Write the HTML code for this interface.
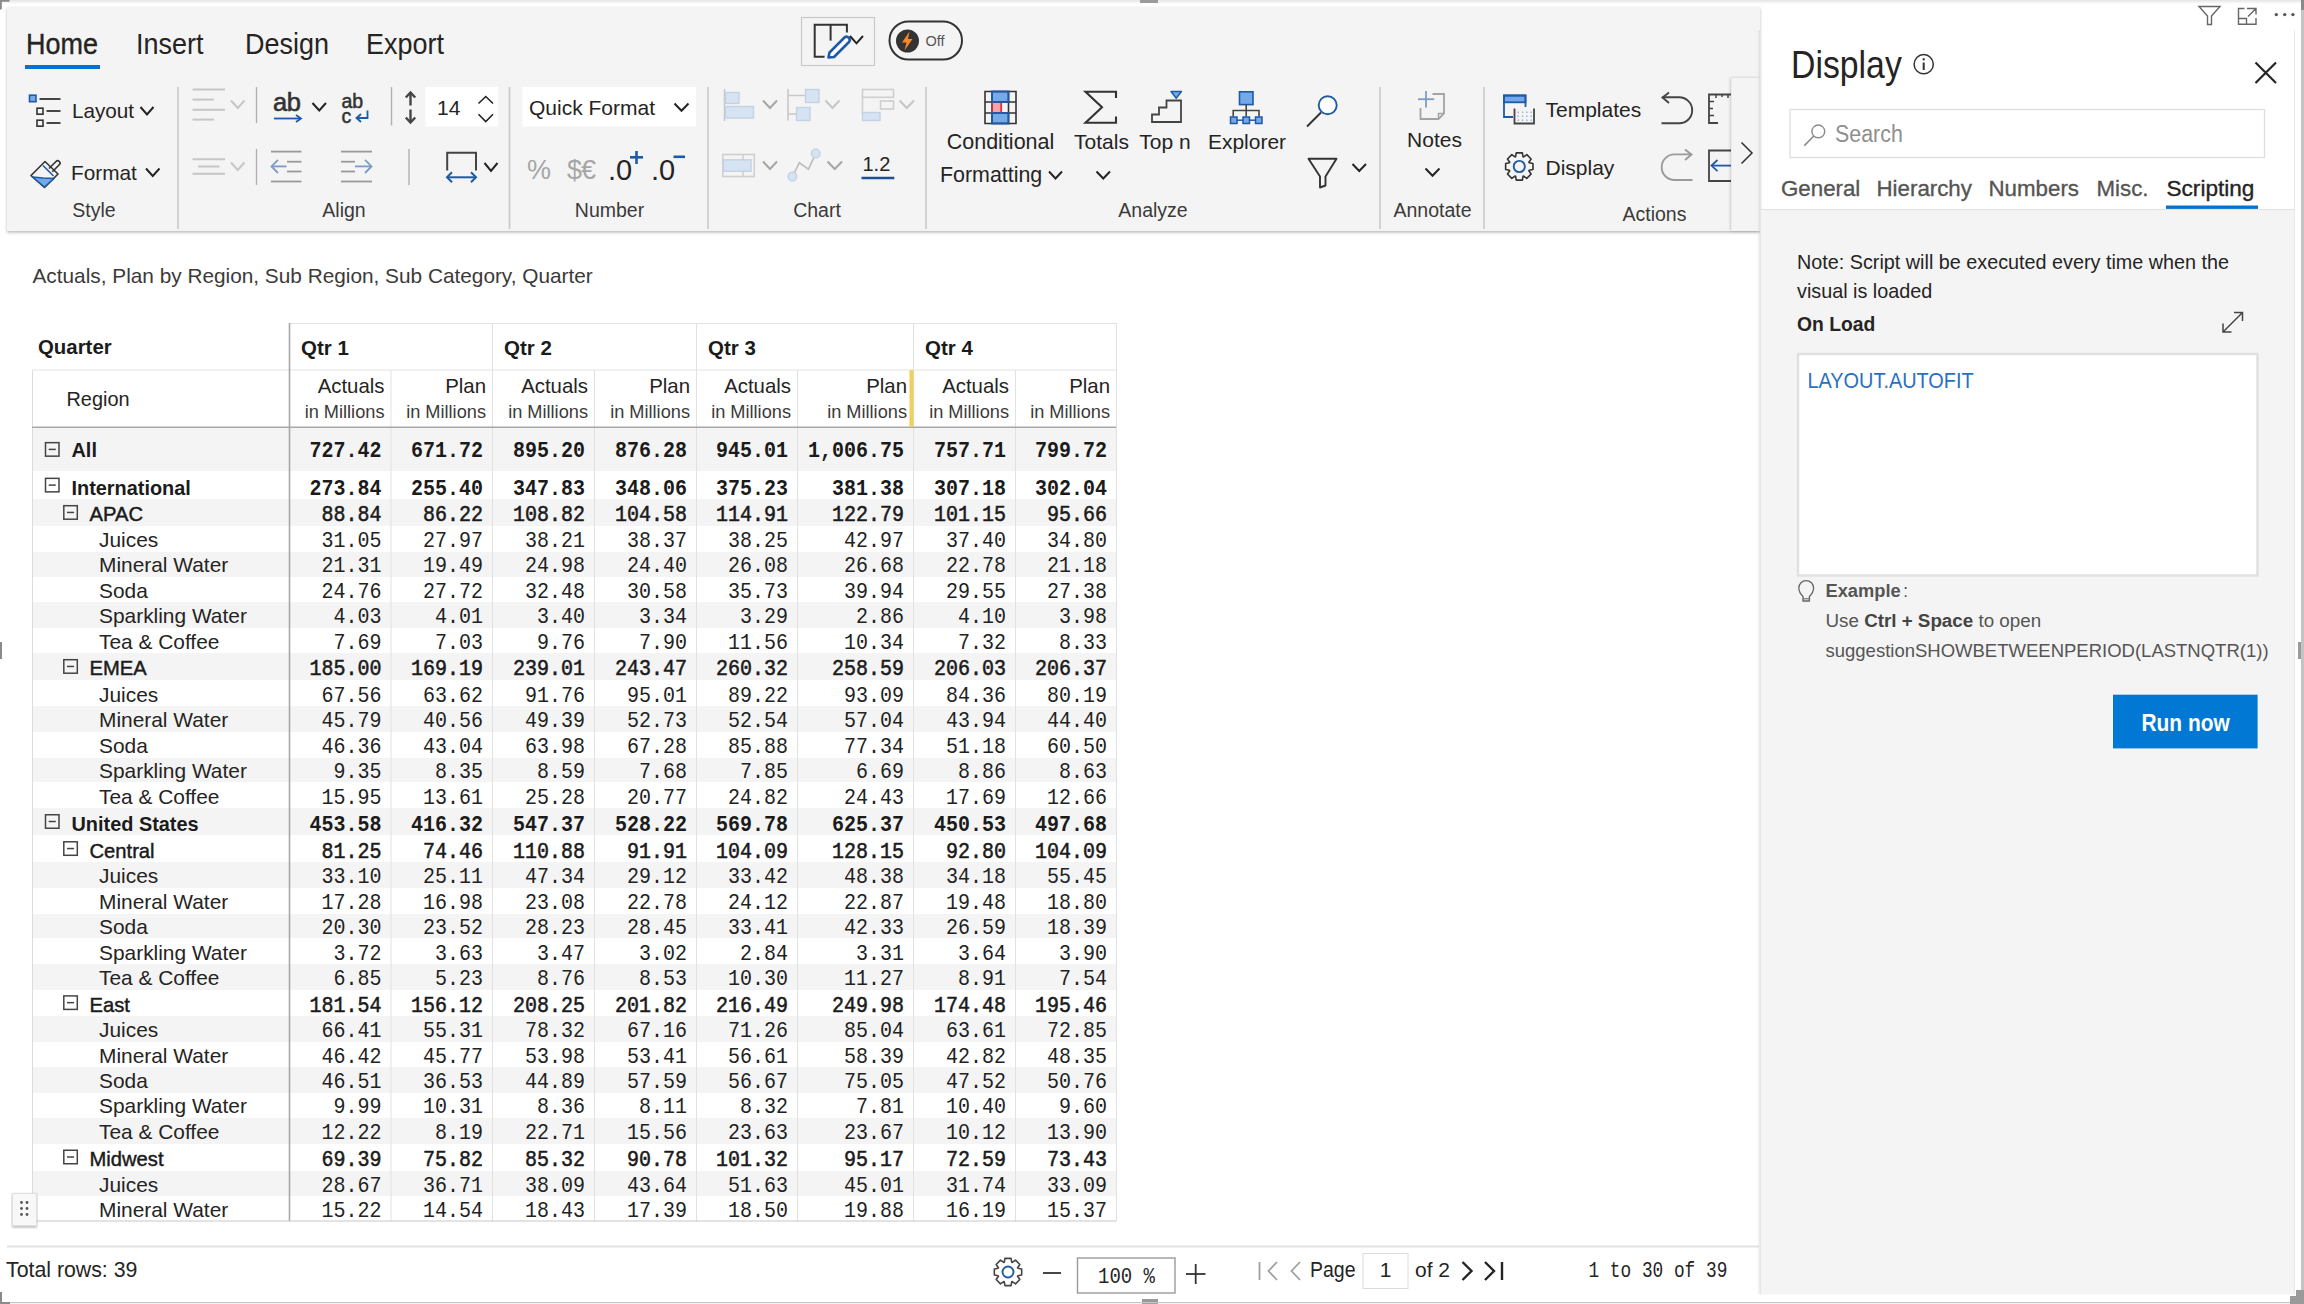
<!DOCTYPE html>
<html><head><meta charset="utf-8"><title>Display</title>
<style>
html,body{margin:0;padding:0;background:#fff;width:2304px;height:1304px;overflow:hidden;font-family:"Liberation Sans",sans-serif;}
svg{display:block;position:absolute;left:0;top:0;}
text{white-space:pre;}
</style></head><body>
<svg width="2304" height="1304" viewBox="0 0 2304 1304" fill="none">
<rect x="0" y="0" width="2304" height="1304" fill="#ffffff" stroke="none" stroke-width="1" />
<defs><filter id="sh" x="-5%" y="-5%" width="110%" height="115%"><feDropShadow dx="0" dy="1.5" stdDeviation="1.5" flood-color="#000" flood-opacity="0.28"/></filter><filter id="sh2" x="-20%" y="-5%" width="140%" height="110%"><feDropShadow dx="-1" dy="0" stdDeviation="1.5" flood-color="#000" flood-opacity="0.22"/></filter></defs>
<rect x="7" y="7" width="1753" height="224" fill="#f4f4f4" stroke="none" stroke-width="1" filter="url(#sh)"/>
<defs><linearGradient id="tg" x1="0" y1="0" x2="0" y2="1"><stop offset="0" stop-color="#e4e4e4"/><stop offset="1" stop-color="#ffffff"/></linearGradient></defs>
<rect x="0" y="0" width="2304" height="4" fill="url(#tg)" stroke="none" stroke-width="1" />
<path d="M0 0H9.5V1.8H1.8V9.5H0Z" stroke="none" fill="#8a8a8a" stroke-width="1" />
<rect x="1140" y="0" width="18" height="3" fill="#9a9a9a" stroke="none" stroke-width="1" />
<rect x="0" y="642" width="2" height="17" fill="#8a8a8a" stroke="none" stroke-width="1" />
<rect x="2298" y="642" width="6" height="17" fill="#9a9a9a" stroke="none" stroke-width="1" />
<rect x="1142" y="1299" width="16" height="5" fill="#9a9a9a" stroke="none" stroke-width="1" />
<rect x="0" y="1302" width="2304" height="1.2" fill="#c4c4c4" stroke="none" stroke-width="1" />
<rect x="2301" y="0" width="3" height="1304" fill="#c4c4c4" stroke="none" stroke-width="1" />
<rect x="2301" y="0" width="3" height="10" fill="#8a8a8a" stroke="none" stroke-width="1" />
<path d="M2290 1304V1296H2296V1290H2304V1304Z" stroke="none" fill="#9a9a9a" stroke-width="1" />
<path d="M0 1292H2V1302H10V1304H0Z" stroke="none" fill="#8a8a8a" stroke-width="1" />
<text transform="translate(26 53.8) scale(1 1.12)" font-size="27" fill="#252423" font-weight="normal" text-anchor="start" font-family="Liberation Sans" stroke="#252423" stroke-width="0.35">Home</text>
<text transform="translate(136 53.8) scale(1 1.12)" font-size="27" fill="#252423" font-weight="normal" text-anchor="start" font-family="Liberation Sans" >Insert</text>
<text transform="translate(245 53.8) scale(1 1.12)" font-size="27" fill="#252423" font-weight="normal" text-anchor="start" font-family="Liberation Sans" >Design</text>
<text transform="translate(366 53.8) scale(1 1.12)" font-size="27" fill="#252423" font-weight="normal" text-anchor="start" font-family="Liberation Sans" >Export</text>
<rect x="25" y="65" width="75" height="4" fill="#0a72cc" stroke="none" stroke-width="1" />
<rect x="801.5" y="17.5" width="73" height="48" fill="none" stroke="#c8c8c8" stroke-width="1.2" />
<path d="M824.6 56.8H814.7V24.8H846.9V32.6" stroke="#333" fill="none" stroke-width="2" />
<line x1="830.6" y1="24.8" x2="830.6" y2="40.6" stroke="#333" stroke-width="2" />
<path d="M846 39.5L831 54.5L829.5 56.5L833 56L848 41" stroke="#fff" fill="none" stroke-width="1" />
<path d="M844.5 37.5 a3.2 3.2 0 0 1 4.5 4.5 L834 57 L828.5 57.5 L829.5 52.5 Z" stroke="#1f5aa6" fill="#fff" stroke-width="2.6" stroke-linejoin="round"/>
<path d="M850 36L856.5 43.3L863 36" stroke="#252423" fill="none" stroke-width="2" stroke-linecap="butt" stroke-linejoin="miter"/>
<rect x="889.5" y="21.5" width="72.5" height="38" fill="none" stroke="#333" stroke-width="2" rx="19"/>
<circle cx="907.5" cy="41" r="11.5" fill="#333"/>
<path d="M909.5 31.5L902 42.5H906.5L904.5 50.5L912.5 39H908Z" stroke="none" fill="#f3892b" stroke-width="1" />
<text x="925.5" y="45.8" font-size="14.5" fill="#555" font-weight="normal" text-anchor="start" font-family="Liberation Sans" >Off</text>
<line x1="178" y1="87" x2="178" y2="229" stroke="#c8c8c8" stroke-width="1.6" />
<line x1="509.5" y1="87" x2="509.5" y2="229" stroke="#c8c8c8" stroke-width="1.6" />
<line x1="708" y1="87" x2="708" y2="229" stroke="#c8c8c8" stroke-width="1.6" />
<line x1="926" y1="87" x2="926" y2="229" stroke="#c8c8c8" stroke-width="1.6" />
<line x1="1380" y1="87" x2="1380" y2="229" stroke="#c8c8c8" stroke-width="1.6" />
<line x1="1484" y1="87" x2="1484" y2="229" stroke="#c8c8c8" stroke-width="1.6" />
<text x="94" y="217" font-size="19.5" fill="#3b3a39" font-weight="normal" text-anchor="middle" font-family="Liberation Sans" >Style</text>
<text x="344" y="217" font-size="19.5" fill="#3b3a39" font-weight="normal" text-anchor="middle" font-family="Liberation Sans" >Align</text>
<text x="609.5" y="217" font-size="19.5" fill="#3b3a39" font-weight="normal" text-anchor="middle" font-family="Liberation Sans" >Number</text>
<text x="817" y="217" font-size="19.5" fill="#3b3a39" font-weight="normal" text-anchor="middle" font-family="Liberation Sans" >Chart</text>
<text x="1153" y="217" font-size="19.5" fill="#3b3a39" font-weight="normal" text-anchor="middle" font-family="Liberation Sans" >Analyze</text>
<text x="1432.5" y="217" font-size="19.5" fill="#3b3a39" font-weight="normal" text-anchor="middle" font-family="Liberation Sans" >Annotate</text>
<text x="1654.5" y="220.5" font-size="19.5" fill="#3b3a39" font-weight="normal" text-anchor="middle" font-family="Liberation Sans" >Actions</text>
<rect x="29.5" y="95.2" width="6.5" height="6.5" fill="#75a9e8" stroke="#1f5aa6" stroke-width="1.6" />
<line x1="39.5" y1="99" x2="60.5" y2="99" stroke="#333" stroke-width="1.8" />
<rect x="37" y="108.2" width="6" height="6" fill="none" stroke="#333" stroke-width="1.6" />
<line x1="46.5" y1="111" x2="60.5" y2="111" stroke="#333" stroke-width="1.8" />
<rect x="37" y="120.2" width="6" height="6" fill="none" stroke="#333" stroke-width="1.6" />
<line x1="46.5" y1="123" x2="60.5" y2="123" stroke="#333" stroke-width="1.8" />
<text x="72" y="118" font-size="20.7" fill="#252423" font-weight="normal" text-anchor="start" font-family="Liberation Sans" >Layout</text>
<path d="M140.5 107L147.0 114.5L153.5 107" stroke="#252423" fill="none" stroke-width="2" stroke-linecap="butt" stroke-linejoin="miter"/>
<path d="M31 175.5L45 161.5L58 174L44.5 187.5Z" stroke="#333" fill="none" stroke-width="1.6" stroke-linejoin="round"/>
<path d="M32.5 177L43 178L54 178.5L44.5 187Z" stroke="#1f5aa6" fill="#75a9e8" stroke-width="1.6" stroke-linejoin="round"/>
<line x1="43" y1="165.5" x2="53.5" y2="176" stroke="#1f5aa6" stroke-width="1.6" />
<path d="M49 168.5L56 161.5a2.3 2.3 0 0 1 3.3 3.3L52.3 171.8" stroke="#333" fill="none" stroke-width="1.6" />
<text x="71" y="179.5" font-size="20.8" fill="#252423" font-weight="normal" text-anchor="start" font-family="Liberation Sans" >Format</text>
<path d="M146 168.5L152.75 176L159.5 168.5" stroke="#252423" fill="none" stroke-width="2" stroke-linecap="butt" stroke-linejoin="miter"/>
<line x1="192.5" y1="89.5" x2="225" y2="89.5" stroke="#c8c6c4" stroke-width="2" />
<line x1="192.5" y1="99.6" x2="214" y2="99.6" stroke="#c8c6c4" stroke-width="2" />
<line x1="192.5" y1="109.7" x2="225" y2="109.7" stroke="#c8c6c4" stroke-width="2" />
<line x1="192.5" y1="119.6" x2="214" y2="119.6" stroke="#c8c6c4" stroke-width="2" />
<path d="M231 100.5L237.75 108L244.5 100.5" stroke="#c8c6c4" fill="none" stroke-width="2" stroke-linecap="butt" stroke-linejoin="miter"/>
<line x1="256.5" y1="87" x2="256.5" y2="123" stroke="#b0b0b0" stroke-width="1.4" />
<text x="273" y="111" font-size="25.5" fill="#333" font-weight="normal" text-anchor="start" font-family="Liberation Sans" letter-spacing="-0.5" stroke="#333" stroke-width="0.6">ab</text>
<line x1="274" y1="118.5" x2="300" y2="118.5" stroke="#1f5aa6" stroke-width="1.8" />
<path d="M296 115L301 118.5L296 122" stroke="#1f5aa6" fill="none" stroke-width="1.8" />
<path d="M312.5 103L319.25 110.5L326 103" stroke="#252423" fill="none" stroke-width="2" stroke-linecap="butt" stroke-linejoin="miter"/>
<line x1="192.5" y1="159.2" x2="225" y2="159.2" stroke="#c8c6c4" stroke-width="2" />
<line x1="198" y1="166.5" x2="219.5" y2="166.5" stroke="#c8c6c4" stroke-width="2" />
<line x1="192.5" y1="173.8" x2="225" y2="173.8" stroke="#c8c6c4" stroke-width="2" />
<path d="M231 162.5L237.75 170L244.5 162.5" stroke="#c8c6c4" fill="none" stroke-width="2" stroke-linecap="butt" stroke-linejoin="miter"/>
<line x1="256.5" y1="149" x2="256.5" y2="185" stroke="#b0b0b0" stroke-width="1.4" />
<line x1="271" y1="151.6" x2="301.5" y2="151.6" stroke="#9a9a9a" stroke-width="1.8" />
<line x1="287" y1="161.7" x2="301.5" y2="161.7" stroke="#9a9a9a" stroke-width="1.8" />
<line x1="287" y1="171.5" x2="301.5" y2="171.5" stroke="#9a9a9a" stroke-width="1.8" />
<line x1="271" y1="181.5" x2="301.5" y2="181.5" stroke="#9a9a9a" stroke-width="1.8" />
<line x1="272" y1="166.4" x2="286.5" y2="166.4" stroke="#7a9cc6" stroke-width="1.8" />
<path d="M278 159.8L271.5 166.4L278 173" stroke="#7a9cc6" fill="none" stroke-width="1.8" />
<text x="341.5" y="107.5" font-size="19.5" fill="#333" font-weight="normal" text-anchor="start" font-family="Liberation Sans" stroke="#333" stroke-width="0.5">ab</text>
<text x="341.5" y="122.5" font-size="19.5" fill="#333" font-weight="normal" text-anchor="start" font-family="Liberation Sans" stroke="#333" stroke-width="0.5">c</text>
<path d="M367.5 110.5V118H357" stroke="#1f5aa6" fill="none" stroke-width="1.8" />
<path d="M361 114L356.5 118L361 122" stroke="#1f5aa6" fill="none" stroke-width="1.8" />
<line x1="391.5" y1="87" x2="391.5" y2="125.5" stroke="#b0b0b0" stroke-width="1.4" />
<line x1="341" y1="151.6" x2="372" y2="151.6" stroke="#9a9a9a" stroke-width="1.8" />
<line x1="341" y1="161.7" x2="355" y2="161.7" stroke="#9a9a9a" stroke-width="1.8" />
<line x1="341" y1="171.5" x2="355" y2="171.5" stroke="#9a9a9a" stroke-width="1.8" />
<line x1="341" y1="181.5" x2="372" y2="181.5" stroke="#9a9a9a" stroke-width="1.8" />
<line x1="355" y1="166.4" x2="371" y2="166.4" stroke="#7a9cc6" stroke-width="1.8" />
<path d="M365 159.8L371.5 166.4L365 173" stroke="#7a9cc6" fill="none" stroke-width="1.8" />
<line x1="409" y1="149" x2="409" y2="185" stroke="#b0b0b0" stroke-width="1.4" />
<line x1="410.5" y1="93" x2="410.5" y2="105.5" stroke="#444" stroke-width="2.4" />
<line x1="410.5" y1="109.5" x2="410.5" y2="122" stroke="#444" stroke-width="2.4" />
<path d="M405.8 97.5L410.5 92.5L415.2 97.5" stroke="#444" fill="none" stroke-width="2.4" stroke-linejoin="miter"/>
<path d="M405.8 117.5L410.5 122.5L415.2 117.5" stroke="#444" fill="none" stroke-width="2.4" stroke-linejoin="miter"/>
<rect x="425.5" y="87" width="72.5" height="39.5" fill="#ffffff" stroke="none" stroke-width="1" />
<text x="437" y="114.5" font-size="21" fill="#252423" font-weight="normal" text-anchor="start" font-family="Liberation Sans" >14</text>
<path d="M478.5 103.5L485.75 96.5L493 103.5" stroke="#252423" fill="none" stroke-width="1.6" stroke-linecap="butt" stroke-linejoin="miter"/>
<path d="M478.5 114.3L485.75 121.5L493 114.3" stroke="#252423" fill="none" stroke-width="1.6" stroke-linecap="butt" stroke-linejoin="miter"/>
<path d="M447.2 170.5V152.8H476V170.5" stroke="#444" fill="none" stroke-width="2" />
<line x1="448" y1="177.3" x2="476" y2="177.3" stroke="#1f5aa6" stroke-width="2" />
<path d="M452 172.3L447 177.3L452 182.3" stroke="#1f5aa6" fill="none" stroke-width="2" />
<path d="M471 172.3L476 177.3L471 182.3" stroke="#1f5aa6" fill="none" stroke-width="2" />
<path d="M484.5 163L491.0 171L497.5 163" stroke="#252423" fill="none" stroke-width="2" stroke-linecap="butt" stroke-linejoin="miter"/>
<rect x="522.5" y="87" width="173.5" height="39.5" fill="#ffffff" stroke="none" stroke-width="1" />
<text x="529" y="114.5" font-size="21" fill="#252423" font-weight="normal" text-anchor="start" font-family="Liberation Sans" >Quick Format</text>
<path d="M674.5 103.5L681.5 110.8L688.5 103.5" stroke="#252423" fill="none" stroke-width="2" stroke-linecap="butt" stroke-linejoin="miter"/>
<text x="527" y="178.5" font-size="27" fill="#a6a6a6" font-weight="normal" text-anchor="start" font-family="Liberation Sans" >%</text>
<text x="567" y="178.5" font-size="27" fill="#a6a6a6" font-weight="normal" text-anchor="start" font-family="Liberation Sans" letter-spacing="-1">$€</text>
<text x="608" y="180" font-size="29" fill="#252423" font-weight="normal" text-anchor="start" font-family="Liberation Sans" >.0</text>
<text x="651" y="180" font-size="29" fill="#252423" font-weight="normal" text-anchor="start" font-family="Liberation Sans" >.0</text>
<line x1="630" y1="157.3" x2="643" y2="157.3" stroke="#1f5aa6" stroke-width="2.6" />
<line x1="636.5" y1="151" x2="636.5" y2="164" stroke="#1f5aa6" stroke-width="2.6" />
<line x1="673.5" y1="156.8" x2="685" y2="156.8" stroke="#1f5aa6" stroke-width="2.6" />
<line x1="724.5" y1="89" x2="724.5" y2="121" stroke="#c8c8c8" stroke-width="1.6" />
<rect x="725.5" y="92.5" width="13.5" height="11" fill="#d5e3f3" stroke="#c3d2e4" stroke-width="1.4" />
<rect x="725.5" y="106.5" width="28" height="11.5" fill="#d5e3f3" stroke="#c3d2e4" stroke-width="1.4" />
<path d="M763 100.5L770.0 108L777 100.5" stroke="#a6a6a6" fill="none" stroke-width="2" stroke-linecap="butt" stroke-linejoin="miter"/>
<path d="M788 89V120.5M788 95.5H805M788 114H797" stroke="#c8c8c8" fill="none" stroke-width="1.6" />
<rect x="805.5" y="89.5" width="13.5" height="13" fill="#d5e3f3" stroke="#c3d2e4" stroke-width="1.4" />
<rect x="796.5" y="107.5" width="13.5" height="13" fill="#d5e3f3" stroke="#c3d2e4" stroke-width="1.4" />
<path d="M825.5 100.5L832.5 108L839.5 100.5" stroke="#c8c6c4" fill="none" stroke-width="2" stroke-linecap="butt" stroke-linejoin="miter"/>
<rect x="862.5" y="89.5" width="31" height="7.8" fill="none" stroke="#cfcfcf" stroke-width="1.6" />
<rect x="880.5" y="101" width="13" height="8" fill="none" stroke="#cfcfcf" stroke-width="1.6" />
<line x1="862.5" y1="97" x2="862.5" y2="113" stroke="#cfcfcf" stroke-width="1.6" />
<rect x="862.5" y="112.5" width="17.5" height="8" fill="#d5e3f3" stroke="#c3d2e4" stroke-width="1.4" />
<path d="M899.5 100.5L906.75 108L914 100.5" stroke="#c8c6c4" fill="none" stroke-width="2" stroke-linecap="butt" stroke-linejoin="miter"/>
<rect x="722.8" y="154.5" width="31.5" height="22" fill="none" stroke="#cfcfcf" stroke-width="1.6" />
<line x1="743" y1="154.5" x2="743" y2="176.5" stroke="#cfcfcf" stroke-width="1.6" />
<rect x="723.5" y="159.8" width="27.5" height="11.5" fill="#d5e3f3" stroke="#c3d2e4" stroke-width="1.4" />
<path d="M763 161.5L770.0 169L777 161.5" stroke="#a6a6a6" fill="none" stroke-width="2" stroke-linecap="butt" stroke-linejoin="miter"/>
<path d="M792.5 176.5L799.3 162.8L808.5 169.2L815.7 153.6" stroke="#bdbdbd" fill="none" stroke-width="1.6" />
<circle cx="792.4" cy="176.6" r="4.3" fill="#d5e3f3" stroke="#c3d2e4" stroke-width="1.4"/>
<circle cx="815.7" cy="153.6" r="4.3" fill="#d5e3f3" stroke="#c3d2e4" stroke-width="1.4"/>
<path d="M827.5 161.5L834.75 169L842 161.5" stroke="#a6a6a6" fill="none" stroke-width="2" stroke-linecap="butt" stroke-linejoin="miter"/>
<text x="862.5" y="171" font-size="20" fill="#252423" font-weight="normal" text-anchor="start" font-family="Liberation Sans" >1.2</text>
<line x1="861.5" y1="178" x2="894.3" y2="178" stroke="#1f4e99" stroke-width="2.4" />
<rect x="992" y="92" width="16.5" height="10" fill="#75a9e8" stroke="none" stroke-width="1" />
<rect x="992" y="113" width="16.5" height="10" fill="#75a9e8" stroke="none" stroke-width="1" />
<rect x="992.5" y="102.5" width="8.5" height="10" fill="#f5a3ab" stroke="none" stroke-width="1" />
<path d="M985 91.5H1016V123.5H985Z M985 102H1016M985 113H1016M992 91.5V123.5M1008.5 91.5V123.5" stroke="#333" fill="none" stroke-width="1.6" />
<path d="M992 91.5H1008.5V102H992Z M992 113H1008.5V123.5H992Z" stroke="#1f5aa6" fill="none" stroke-width="1.8" />
<line x1="1001.2" y1="102.5" x2="1001.2" y2="112.5" stroke="#d9303c" stroke-width="1.8" />
<line x1="992.2" y1="102.5" x2="992.2" y2="112.5" stroke="#d9303c" stroke-width="1.2" />
<text x="1000.5" y="149" font-size="21.5" fill="#252423" font-weight="normal" text-anchor="middle" font-family="Liberation Sans" >Conditional</text>
<text x="940" y="181.8" font-size="21.4" fill="#252423" font-weight="normal" text-anchor="start" font-family="Liberation Sans" >Formatting</text>
<path d="M1049 171.5L1055.5 178.5L1062 171.5" stroke="#252423" fill="none" stroke-width="2" stroke-linecap="butt" stroke-linejoin="miter"/>
<path d="M1116 98V91.8H1085.5L1102 107.3L1085.5 122.8H1116V116.5" stroke="#333" fill="none" stroke-width="2.1" stroke-linejoin="miter"/>
<text x="1101.5" y="149" font-size="21" fill="#252423" font-weight="normal" text-anchor="middle" font-family="Liberation Sans" >Totals</text>
<path d="M1096.5 171.5L1103.25 178.5L1110 171.5" stroke="#252423" fill="none" stroke-width="2" stroke-linecap="butt" stroke-linejoin="miter"/>
<path d="M1152 122V114.5H1159V107.5H1166.5V100.5H1181V122Z" stroke="#444" fill="none" stroke-width="1.8" />
<path d="M1171 91.5H1181.5L1176.2 98.2Z" stroke="#1f5aa6" fill="#73a9e8" stroke-width="1.4" stroke-linejoin="round"/>
<text x="1165" y="149" font-size="21" fill="#252423" font-weight="normal" text-anchor="middle" font-family="Liberation Sans" >Top n</text>
<rect x="1239.5" y="91.8" width="13.5" height="12.8" fill="#73a9e8" stroke="#1f5aa6" stroke-width="1.6" />
<path d="M1246.2 104.6V110.5M1233.2 116.5V110.5H1259V116.5M1246.2 110.5V116.5" stroke="#444" fill="none" stroke-width="1.6" />
<rect x="1230.5" y="117" width="6.5" height="6.5" fill="#73a9e8" stroke="#1f5aa6" stroke-width="1.5" />
<rect x="1243" y="117" width="6.5" height="6.5" fill="#73a9e8" stroke="#1f5aa6" stroke-width="1.5" />
<rect x="1255.5" y="117" width="6.5" height="6.5" fill="#73a9e8" stroke="#1f5aa6" stroke-width="1.5" />
<line x1="1237" y1="120.2" x2="1243" y2="120.2" stroke="#1f5aa6" stroke-width="1.5" />
<line x1="1249.5" y1="120.2" x2="1255.5" y2="120.2" stroke="#1f5aa6" stroke-width="1.5" />
<text x="1247" y="149" font-size="21" fill="#252423" font-weight="normal" text-anchor="middle" font-family="Liberation Sans" >Explorer</text>
<circle cx="1327.7" cy="105.3" r="9" fill="#fff" stroke="#1f5aa6" stroke-width="1.9"/>
<line x1="1307" y1="126.5" x2="1321" y2="112.5" stroke="#333" stroke-width="1.9" />
<path d="M1308.5 158.8H1336.5L1325.5 176.5V185.5L1320 187.5V176.5Z" stroke="#333" fill="none" stroke-width="1.9" stroke-linejoin="round"/>
<path d="M1352.5 164L1359.25 171L1366 164" stroke="#252423" fill="none" stroke-width="2" stroke-linecap="butt" stroke-linejoin="miter"/>
<path d="M1420.5 108V119H1438.5L1444 113.5V94H1432.5" stroke="#a3a3a3" fill="none" stroke-width="1.8" />
<path d="M1438.5 119V113.5H1444" stroke="#a3a3a3" fill="none" stroke-width="1.5" />
<line x1="1418" y1="99.2" x2="1434.2" y2="99.2" stroke="#7d9cc4" stroke-width="1.8" />
<line x1="1426" y1="91" x2="1426" y2="107.5" stroke="#7d9cc4" stroke-width="1.8" />
<text x="1434.5" y="147.3" font-size="21" fill="#252423" font-weight="normal" text-anchor="middle" font-family="Liberation Sans" >Notes</text>
<path d="M1425.5 168.5L1432.5 175.7L1439.5 168.5" stroke="#252423" fill="none" stroke-width="2" stroke-linecap="butt" stroke-linejoin="miter"/>
<rect x="1504" y="95.5" width="21.5" height="6.8" fill="#73a9e8" stroke="#1f5aa6" stroke-width="1.8" />
<path d="M1513 117H1504V95.5H1525.5V107" stroke="#1f5aa6" fill="none" stroke-width="1.8" />
<path d="M1514.5 108.5V123.5H1534V108.5" stroke="#444" fill="none" stroke-width="1.8" />
<rect x="1517.5" y="111.5" width="1.5" height="1.5" fill="#9cb6d6"/>
<rect x="1517.5" y="115.5" width="1.5" height="1.5" fill="#9cb6d6"/>
<rect x="1517.5" y="119.5" width="1.5" height="1.5" fill="#9cb6d6"/>
<rect x="1521.8" y="111.5" width="1.5" height="1.5" fill="#9cb6d6"/>
<rect x="1521.8" y="115.5" width="1.5" height="1.5" fill="#9cb6d6"/>
<rect x="1521.8" y="119.5" width="1.5" height="1.5" fill="#9cb6d6"/>
<rect x="1526.1" y="111.5" width="1.5" height="1.5" fill="#9cb6d6"/>
<rect x="1526.1" y="115.5" width="1.5" height="1.5" fill="#9cb6d6"/>
<rect x="1526.1" y="119.5" width="1.5" height="1.5" fill="#9cb6d6"/>
<rect x="1530.4" y="111.5" width="1.5" height="1.5" fill="#9cb6d6"/>
<rect x="1530.4" y="115.5" width="1.5" height="1.5" fill="#9cb6d6"/>
<rect x="1530.4" y="119.5" width="1.5" height="1.5" fill="#9cb6d6"/>
<text x="1545.5" y="117.3" font-size="21" fill="#252423" font-weight="normal" text-anchor="start" font-family="Liberation Sans" >Templates</text>
<path d="M1532.96 163.44L1532.96 169.56L1529.13 170.20L1528.86 170.83L1531.12 174.00L1526.80 178.32L1523.63 176.06L1523.00 176.33L1522.36 180.16L1516.24 180.16L1515.60 176.33L1514.97 176.06L1511.80 178.32L1507.48 174.00L1509.74 170.83L1509.47 170.20L1505.64 169.56L1505.64 163.44L1509.47 162.80L1509.74 162.17L1507.48 159.00L1511.80 154.68L1514.97 156.94L1515.60 156.67L1516.24 152.84L1522.36 152.84L1523.00 156.67L1523.63 156.94L1526.80 154.68L1531.12 159.00L1528.86 162.17L1529.13 162.80Z" stroke="#333" fill="none" stroke-width="1.6" stroke-linejoin="round"/>
<circle cx="1519.3" cy="166.5" r="5.6" fill="none" stroke="#1f5aa6" stroke-width="1.9000000000000001"/>
<text x="1545.5" y="174.8" font-size="21" fill="#252423" font-weight="normal" text-anchor="start" font-family="Liberation Sans" >Display</text>
<path d="M1661.5 123.3H1679.2a13 13 0 0 0 0-26H1662.5" stroke="#444" fill="none" stroke-width="1.9" />
<path d="M1669 92.5L1662.5 97.5L1669 103" stroke="#444" fill="none" stroke-width="1.9" />
<path d="M1692.5 180H1674.5a12.8 12.8 0 0 1 0-25.6H1691.5" stroke="#9a9a9a" fill="none" stroke-width="1.9" />
<path d="M1685 149.5L1691.5 154.5L1685 160" stroke="#9a9a9a" fill="none" stroke-width="1.9" />
<path d="M1731 94.5H1709V123H1718" stroke="#444" fill="none" stroke-width="1.8" />
<path d="M1709 101.5H1714M1709 108.5H1713M1709 115.5H1714M1716 94.5V98M1722 94.5V97M1728 94.5V98" stroke="#444" fill="none" stroke-width="1.5" />
<path d="M1731 150.5H1709V181H1731" stroke="#444" fill="none" stroke-width="1.8" />
<line x1="1712" y1="165.6" x2="1731" y2="165.6" stroke="#1f5aa6" stroke-width="1.8" />
<path d="M1717.5 160L1711.5 165.6L1717.5 171.2" stroke="#1f5aa6" fill="none" stroke-width="1.8" />
<rect x="1731.5" y="78" width="28.5" height="153" fill="#f4f4f4" stroke="none" stroke-width="1" filter="url(#sh2)"/>
<path d="M1741.5 142.5L1752 153L1741.5 163.5" stroke="#333" fill="none" stroke-width="1.5" />
<text x="32.5" y="282.8" font-size="20.8" fill="#3b3a39" font-weight="normal" text-anchor="start" font-family="Liberation Sans" >Actuals, Plan by Region, Sub Region, Sub Category, Quarter</text>
<line x1="289" y1="323.5" x2="1116" y2="323.5" stroke="#e3e3e3" stroke-width="1" />
<line x1="32" y1="370" x2="1116" y2="370" stroke="#e3e3e3" stroke-width="1" />
<text x="38" y="353.5" font-size="20.4" fill="#1b1b1b" font-weight="bold" text-anchor="start" font-family="Liberation Sans" >Quarter</text>
<text x="66.5" y="406" font-size="19.9" fill="#252423" font-weight="normal" text-anchor="start" font-family="Liberation Sans" >Region</text>
<text x="301" y="354.5" font-size="20.5" fill="#1b1b1b" font-weight="bold" text-anchor="start" font-family="Liberation Sans" >Qtr 1</text>
<text x="504" y="354.5" font-size="20.5" fill="#1b1b1b" font-weight="bold" text-anchor="start" font-family="Liberation Sans" >Qtr 2</text>
<text x="708" y="354.5" font-size="20.5" fill="#1b1b1b" font-weight="bold" text-anchor="start" font-family="Liberation Sans" >Qtr 3</text>
<text x="925" y="354.5" font-size="20.5" fill="#1b1b1b" font-weight="bold" text-anchor="start" font-family="Liberation Sans" >Qtr 4</text>
<text x="384.5" y="393.3" font-size="20.4" fill="#252423" font-weight="normal" text-anchor="end" font-family="Liberation Sans" >Actuals</text>
<text x="384.5" y="418" font-size="18.2" fill="#3b3a39" font-weight="normal" text-anchor="end" font-family="Liberation Sans" >in Millions</text>
<text x="486" y="393.3" font-size="20.4" fill="#252423" font-weight="normal" text-anchor="end" font-family="Liberation Sans" >Plan</text>
<text x="486" y="418" font-size="18.2" fill="#3b3a39" font-weight="normal" text-anchor="end" font-family="Liberation Sans" >in Millions</text>
<text x="588" y="393.3" font-size="20.4" fill="#252423" font-weight="normal" text-anchor="end" font-family="Liberation Sans" >Actuals</text>
<text x="588" y="418" font-size="18.2" fill="#3b3a39" font-weight="normal" text-anchor="end" font-family="Liberation Sans" >in Millions</text>
<text x="690" y="393.3" font-size="20.4" fill="#252423" font-weight="normal" text-anchor="end" font-family="Liberation Sans" >Plan</text>
<text x="690" y="418" font-size="18.2" fill="#3b3a39" font-weight="normal" text-anchor="end" font-family="Liberation Sans" >in Millions</text>
<text x="791" y="393.3" font-size="20.4" fill="#252423" font-weight="normal" text-anchor="end" font-family="Liberation Sans" >Actuals</text>
<text x="791" y="418" font-size="18.2" fill="#3b3a39" font-weight="normal" text-anchor="end" font-family="Liberation Sans" >in Millions</text>
<text x="907" y="393.3" font-size="20.4" fill="#252423" font-weight="normal" text-anchor="end" font-family="Liberation Sans" >Plan</text>
<text x="907" y="418" font-size="18.2" fill="#3b3a39" font-weight="normal" text-anchor="end" font-family="Liberation Sans" >in Millions</text>
<text x="1009" y="393.3" font-size="20.4" fill="#252423" font-weight="normal" text-anchor="end" font-family="Liberation Sans" >Actuals</text>
<text x="1009" y="418" font-size="18.2" fill="#3b3a39" font-weight="normal" text-anchor="end" font-family="Liberation Sans" >in Millions</text>
<text x="1110" y="393.3" font-size="20.4" fill="#252423" font-weight="normal" text-anchor="end" font-family="Liberation Sans" >Plan</text>
<text x="1110" y="418" font-size="18.2" fill="#3b3a39" font-weight="normal" text-anchor="end" font-family="Liberation Sans" >in Millions</text>
<rect x="32.5" y="428" width="1083.5" height="43" fill="#f4f4f4" stroke="none" stroke-width="1" />
<rect x="45.5" y="442.65" width="13.5" height="13.5" fill="none" stroke="#444" stroke-width="1.5" />
<line x1="48.7" y1="449.4" x2="55.8" y2="449.4" stroke="#444" stroke-width="1.5" />
<text x="71.5" y="457.3" font-size="19.9" fill="#1b1b1b" font-weight="bold" text-anchor="start" font-family="Liberation Sans" >All</text>
<g transform="translate(381.5 457.3) scale(1 1.12)">
<text x="0" y="0" font-size="20" fill="#1b1b1b" font-weight="bold" text-anchor="end" font-family="Liberation Mono" >727.42</text>
</g>
<g transform="translate(483 457.3) scale(1 1.12)">
<text x="0" y="0" font-size="20" fill="#1b1b1b" font-weight="bold" text-anchor="end" font-family="Liberation Mono" >671.72</text>
</g>
<g transform="translate(585 457.3) scale(1 1.12)">
<text x="0" y="0" font-size="20" fill="#1b1b1b" font-weight="bold" text-anchor="end" font-family="Liberation Mono" >895.20</text>
</g>
<g transform="translate(687 457.3) scale(1 1.12)">
<text x="0" y="0" font-size="20" fill="#1b1b1b" font-weight="bold" text-anchor="end" font-family="Liberation Mono" >876.28</text>
</g>
<g transform="translate(788 457.3) scale(1 1.12)">
<text x="0" y="0" font-size="20" fill="#1b1b1b" font-weight="bold" text-anchor="end" font-family="Liberation Mono" >945.01</text>
</g>
<g transform="translate(904 457.3) scale(1 1.12)">
<text x="0" y="0" font-size="20" fill="#1b1b1b" font-weight="bold" text-anchor="end" font-family="Liberation Mono" >1,006.75</text>
</g>
<g transform="translate(1006 457.3) scale(1 1.12)">
<text x="0" y="0" font-size="20" fill="#1b1b1b" font-weight="bold" text-anchor="end" font-family="Liberation Mono" >757.71</text>
</g>
<g transform="translate(1107 457.3) scale(1 1.12)">
<text x="0" y="0" font-size="20" fill="#1b1b1b" font-weight="bold" text-anchor="end" font-family="Liberation Mono" >799.72</text>
</g>
<rect x="45.5" y="478.35" width="13.5" height="13.5" fill="none" stroke="#444" stroke-width="1.5" />
<line x1="48.7" y1="485.1" x2="55.8" y2="485.1" stroke="#444" stroke-width="1.5" />
<text x="71.5" y="494.79999999999995" font-size="19.9" fill="#1b1b1b" font-weight="bold" text-anchor="start" font-family="Liberation Sans" >International</text>
<g transform="translate(381.5 494.79999999999995) scale(1 1.12)">
<text x="0" y="0" font-size="20" fill="#1b1b1b" font-weight="bold" text-anchor="end" font-family="Liberation Mono" >273.84</text>
</g>
<g transform="translate(483 494.79999999999995) scale(1 1.12)">
<text x="0" y="0" font-size="20" fill="#1b1b1b" font-weight="bold" text-anchor="end" font-family="Liberation Mono" >255.40</text>
</g>
<g transform="translate(585 494.79999999999995) scale(1 1.12)">
<text x="0" y="0" font-size="20" fill="#1b1b1b" font-weight="bold" text-anchor="end" font-family="Liberation Mono" >347.83</text>
</g>
<g transform="translate(687 494.79999999999995) scale(1 1.12)">
<text x="0" y="0" font-size="20" fill="#1b1b1b" font-weight="bold" text-anchor="end" font-family="Liberation Mono" >348.06</text>
</g>
<g transform="translate(788 494.79999999999995) scale(1 1.12)">
<text x="0" y="0" font-size="20" fill="#1b1b1b" font-weight="bold" text-anchor="end" font-family="Liberation Mono" >375.23</text>
</g>
<g transform="translate(904 494.79999999999995) scale(1 1.12)">
<text x="0" y="0" font-size="20" fill="#1b1b1b" font-weight="bold" text-anchor="end" font-family="Liberation Mono" >381.38</text>
</g>
<g transform="translate(1006 494.79999999999995) scale(1 1.12)">
<text x="0" y="0" font-size="20" fill="#1b1b1b" font-weight="bold" text-anchor="end" font-family="Liberation Mono" >307.18</text>
</g>
<g transform="translate(1107 494.79999999999995) scale(1 1.12)">
<text x="0" y="0" font-size="20" fill="#1b1b1b" font-weight="bold" text-anchor="end" font-family="Liberation Mono" >302.04</text>
</g>
<rect x="32.5" y="499" width="1083.5" height="27" fill="#f4f4f4" stroke="none" stroke-width="1" />
<rect x="63.8" y="505.70000000000005" width="13.5" height="13.5" fill="none" stroke="#444" stroke-width="1.5" />
<line x1="67.0" y1="512.45" x2="74.1" y2="512.45" stroke="#444" stroke-width="1.5" />
<text x="89.5" y="521.4" font-size="20.2" fill="#1b1b1b" font-weight="normal" text-anchor="start" font-family="Liberation Sans" stroke="#1b1b1b" stroke-width="0.45">APAC</text>
<g transform="translate(381.5 521.4) scale(1 1.12)">
<text x="0" y="0" font-size="20" fill="#1b1b1b" font-weight="normal" text-anchor="end" font-family="Liberation Mono" stroke="#1b1b1b" stroke-width="0.5">88.84</text>
</g>
<g transform="translate(483 521.4) scale(1 1.12)">
<text x="0" y="0" font-size="20" fill="#1b1b1b" font-weight="normal" text-anchor="end" font-family="Liberation Mono" stroke="#1b1b1b" stroke-width="0.5">86.22</text>
</g>
<g transform="translate(585 521.4) scale(1 1.12)">
<text x="0" y="0" font-size="20" fill="#1b1b1b" font-weight="normal" text-anchor="end" font-family="Liberation Mono" stroke="#1b1b1b" stroke-width="0.5">108.82</text>
</g>
<g transform="translate(687 521.4) scale(1 1.12)">
<text x="0" y="0" font-size="20" fill="#1b1b1b" font-weight="normal" text-anchor="end" font-family="Liberation Mono" stroke="#1b1b1b" stroke-width="0.5">104.58</text>
</g>
<g transform="translate(788 521.4) scale(1 1.12)">
<text x="0" y="0" font-size="20" fill="#1b1b1b" font-weight="normal" text-anchor="end" font-family="Liberation Mono" stroke="#1b1b1b" stroke-width="0.5">114.91</text>
</g>
<g transform="translate(904 521.4) scale(1 1.12)">
<text x="0" y="0" font-size="20" fill="#1b1b1b" font-weight="normal" text-anchor="end" font-family="Liberation Mono" stroke="#1b1b1b" stroke-width="0.5">122.79</text>
</g>
<g transform="translate(1006 521.4) scale(1 1.12)">
<text x="0" y="0" font-size="20" fill="#1b1b1b" font-weight="normal" text-anchor="end" font-family="Liberation Mono" stroke="#1b1b1b" stroke-width="0.5">101.15</text>
</g>
<g transform="translate(1107 521.4) scale(1 1.12)">
<text x="0" y="0" font-size="20" fill="#1b1b1b" font-weight="normal" text-anchor="end" font-family="Liberation Mono" stroke="#1b1b1b" stroke-width="0.5">95.66</text>
</g>
<text x="99" y="546.9" font-size="20.9" fill="#252423" font-weight="normal" text-anchor="start" font-family="Liberation Sans" >Juices</text>
<g transform="translate(381.5 546.9) scale(1 1.12)">
<text x="0" y="0" font-size="20" fill="#222" font-weight="normal" text-anchor="end" font-family="Liberation Mono" >31.05</text>
</g>
<g transform="translate(483 546.9) scale(1 1.12)">
<text x="0" y="0" font-size="20" fill="#222" font-weight="normal" text-anchor="end" font-family="Liberation Mono" >27.97</text>
</g>
<g transform="translate(585 546.9) scale(1 1.12)">
<text x="0" y="0" font-size="20" fill="#222" font-weight="normal" text-anchor="end" font-family="Liberation Mono" >38.21</text>
</g>
<g transform="translate(687 546.9) scale(1 1.12)">
<text x="0" y="0" font-size="20" fill="#222" font-weight="normal" text-anchor="end" font-family="Liberation Mono" >38.37</text>
</g>
<g transform="translate(788 546.9) scale(1 1.12)">
<text x="0" y="0" font-size="20" fill="#222" font-weight="normal" text-anchor="end" font-family="Liberation Mono" >38.25</text>
</g>
<g transform="translate(904 546.9) scale(1 1.12)">
<text x="0" y="0" font-size="20" fill="#222" font-weight="normal" text-anchor="end" font-family="Liberation Mono" >42.97</text>
</g>
<g transform="translate(1006 546.9) scale(1 1.12)">
<text x="0" y="0" font-size="20" fill="#222" font-weight="normal" text-anchor="end" font-family="Liberation Mono" >37.40</text>
</g>
<g transform="translate(1107 546.9) scale(1 1.12)">
<text x="0" y="0" font-size="20" fill="#222" font-weight="normal" text-anchor="end" font-family="Liberation Mono" >34.80</text>
</g>
<rect x="32.5" y="552" width="1083.5" height="25" fill="#f4f4f4" stroke="none" stroke-width="1" />
<text x="99" y="572.4" font-size="20.9" fill="#252423" font-weight="normal" text-anchor="start" font-family="Liberation Sans" >Mineral Water</text>
<g transform="translate(381.5 572.4) scale(1 1.12)">
<text x="0" y="0" font-size="20" fill="#222" font-weight="normal" text-anchor="end" font-family="Liberation Mono" >21.31</text>
</g>
<g transform="translate(483 572.4) scale(1 1.12)">
<text x="0" y="0" font-size="20" fill="#222" font-weight="normal" text-anchor="end" font-family="Liberation Mono" >19.49</text>
</g>
<g transform="translate(585 572.4) scale(1 1.12)">
<text x="0" y="0" font-size="20" fill="#222" font-weight="normal" text-anchor="end" font-family="Liberation Mono" >24.98</text>
</g>
<g transform="translate(687 572.4) scale(1 1.12)">
<text x="0" y="0" font-size="20" fill="#222" font-weight="normal" text-anchor="end" font-family="Liberation Mono" >24.40</text>
</g>
<g transform="translate(788 572.4) scale(1 1.12)">
<text x="0" y="0" font-size="20" fill="#222" font-weight="normal" text-anchor="end" font-family="Liberation Mono" >26.08</text>
</g>
<g transform="translate(904 572.4) scale(1 1.12)">
<text x="0" y="0" font-size="20" fill="#222" font-weight="normal" text-anchor="end" font-family="Liberation Mono" >26.68</text>
</g>
<g transform="translate(1006 572.4) scale(1 1.12)">
<text x="0" y="0" font-size="20" fill="#222" font-weight="normal" text-anchor="end" font-family="Liberation Mono" >22.78</text>
</g>
<g transform="translate(1107 572.4) scale(1 1.12)">
<text x="0" y="0" font-size="20" fill="#222" font-weight="normal" text-anchor="end" font-family="Liberation Mono" >21.18</text>
</g>
<text x="99" y="597.8" font-size="20.9" fill="#252423" font-weight="normal" text-anchor="start" font-family="Liberation Sans" >Soda</text>
<g transform="translate(381.5 597.8) scale(1 1.12)">
<text x="0" y="0" font-size="20" fill="#222" font-weight="normal" text-anchor="end" font-family="Liberation Mono" >24.76</text>
</g>
<g transform="translate(483 597.8) scale(1 1.12)">
<text x="0" y="0" font-size="20" fill="#222" font-weight="normal" text-anchor="end" font-family="Liberation Mono" >27.72</text>
</g>
<g transform="translate(585 597.8) scale(1 1.12)">
<text x="0" y="0" font-size="20" fill="#222" font-weight="normal" text-anchor="end" font-family="Liberation Mono" >32.48</text>
</g>
<g transform="translate(687 597.8) scale(1 1.12)">
<text x="0" y="0" font-size="20" fill="#222" font-weight="normal" text-anchor="end" font-family="Liberation Mono" >30.58</text>
</g>
<g transform="translate(788 597.8) scale(1 1.12)">
<text x="0" y="0" font-size="20" fill="#222" font-weight="normal" text-anchor="end" font-family="Liberation Mono" >35.73</text>
</g>
<g transform="translate(904 597.8) scale(1 1.12)">
<text x="0" y="0" font-size="20" fill="#222" font-weight="normal" text-anchor="end" font-family="Liberation Mono" >39.94</text>
</g>
<g transform="translate(1006 597.8) scale(1 1.12)">
<text x="0" y="0" font-size="20" fill="#222" font-weight="normal" text-anchor="end" font-family="Liberation Mono" >29.55</text>
</g>
<g transform="translate(1107 597.8) scale(1 1.12)">
<text x="0" y="0" font-size="20" fill="#222" font-weight="normal" text-anchor="end" font-family="Liberation Mono" >27.38</text>
</g>
<rect x="32.5" y="602" width="1083.5" height="26" fill="#f4f4f4" stroke="none" stroke-width="1" />
<text x="99" y="623.1999999999999" font-size="20.9" fill="#252423" font-weight="normal" text-anchor="start" font-family="Liberation Sans" >Sparkling Water</text>
<g transform="translate(381.5 623.1999999999999) scale(1 1.12)">
<text x="0" y="0" font-size="20" fill="#222" font-weight="normal" text-anchor="end" font-family="Liberation Mono" >4.03</text>
</g>
<g transform="translate(483 623.1999999999999) scale(1 1.12)">
<text x="0" y="0" font-size="20" fill="#222" font-weight="normal" text-anchor="end" font-family="Liberation Mono" >4.01</text>
</g>
<g transform="translate(585 623.1999999999999) scale(1 1.12)">
<text x="0" y="0" font-size="20" fill="#222" font-weight="normal" text-anchor="end" font-family="Liberation Mono" >3.40</text>
</g>
<g transform="translate(687 623.1999999999999) scale(1 1.12)">
<text x="0" y="0" font-size="20" fill="#222" font-weight="normal" text-anchor="end" font-family="Liberation Mono" >3.34</text>
</g>
<g transform="translate(788 623.1999999999999) scale(1 1.12)">
<text x="0" y="0" font-size="20" fill="#222" font-weight="normal" text-anchor="end" font-family="Liberation Mono" >3.29</text>
</g>
<g transform="translate(904 623.1999999999999) scale(1 1.12)">
<text x="0" y="0" font-size="20" fill="#222" font-weight="normal" text-anchor="end" font-family="Liberation Mono" >2.86</text>
</g>
<g transform="translate(1006 623.1999999999999) scale(1 1.12)">
<text x="0" y="0" font-size="20" fill="#222" font-weight="normal" text-anchor="end" font-family="Liberation Mono" >4.10</text>
</g>
<g transform="translate(1107 623.1999999999999) scale(1 1.12)">
<text x="0" y="0" font-size="20" fill="#222" font-weight="normal" text-anchor="end" font-family="Liberation Mono" >3.98</text>
</g>
<text x="99" y="648.8" font-size="20.9" fill="#252423" font-weight="normal" text-anchor="start" font-family="Liberation Sans" >Tea &amp; Coffee</text>
<g transform="translate(381.5 648.8) scale(1 1.12)">
<text x="0" y="0" font-size="20" fill="#222" font-weight="normal" text-anchor="end" font-family="Liberation Mono" >7.69</text>
</g>
<g transform="translate(483 648.8) scale(1 1.12)">
<text x="0" y="0" font-size="20" fill="#222" font-weight="normal" text-anchor="end" font-family="Liberation Mono" >7.03</text>
</g>
<g transform="translate(585 648.8) scale(1 1.12)">
<text x="0" y="0" font-size="20" fill="#222" font-weight="normal" text-anchor="end" font-family="Liberation Mono" >9.76</text>
</g>
<g transform="translate(687 648.8) scale(1 1.12)">
<text x="0" y="0" font-size="20" fill="#222" font-weight="normal" text-anchor="end" font-family="Liberation Mono" >7.90</text>
</g>
<g transform="translate(788 648.8) scale(1 1.12)">
<text x="0" y="0" font-size="20" fill="#222" font-weight="normal" text-anchor="end" font-family="Liberation Mono" >11.56</text>
</g>
<g transform="translate(904 648.8) scale(1 1.12)">
<text x="0" y="0" font-size="20" fill="#222" font-weight="normal" text-anchor="end" font-family="Liberation Mono" >10.34</text>
</g>
<g transform="translate(1006 648.8) scale(1 1.12)">
<text x="0" y="0" font-size="20" fill="#222" font-weight="normal" text-anchor="end" font-family="Liberation Mono" >7.32</text>
</g>
<g transform="translate(1107 648.8) scale(1 1.12)">
<text x="0" y="0" font-size="20" fill="#222" font-weight="normal" text-anchor="end" font-family="Liberation Mono" >8.33</text>
</g>
<rect x="32.5" y="653" width="1083.5" height="27" fill="#f4f4f4" stroke="none" stroke-width="1" />
<rect x="63.8" y="659.7" width="13.5" height="13.5" fill="none" stroke="#444" stroke-width="1.5" />
<line x1="67.0" y1="666.45" x2="74.1" y2="666.45" stroke="#444" stroke-width="1.5" />
<text x="89.5" y="675.4" font-size="20.2" fill="#1b1b1b" font-weight="normal" text-anchor="start" font-family="Liberation Sans" stroke="#1b1b1b" stroke-width="0.45">EMEA</text>
<g transform="translate(381.5 675.4) scale(1 1.12)">
<text x="0" y="0" font-size="20" fill="#1b1b1b" font-weight="normal" text-anchor="end" font-family="Liberation Mono" stroke="#1b1b1b" stroke-width="0.5">185.00</text>
</g>
<g transform="translate(483 675.4) scale(1 1.12)">
<text x="0" y="0" font-size="20" fill="#1b1b1b" font-weight="normal" text-anchor="end" font-family="Liberation Mono" stroke="#1b1b1b" stroke-width="0.5">169.19</text>
</g>
<g transform="translate(585 675.4) scale(1 1.12)">
<text x="0" y="0" font-size="20" fill="#1b1b1b" font-weight="normal" text-anchor="end" font-family="Liberation Mono" stroke="#1b1b1b" stroke-width="0.5">239.01</text>
</g>
<g transform="translate(687 675.4) scale(1 1.12)">
<text x="0" y="0" font-size="20" fill="#1b1b1b" font-weight="normal" text-anchor="end" font-family="Liberation Mono" stroke="#1b1b1b" stroke-width="0.5">243.47</text>
</g>
<g transform="translate(788 675.4) scale(1 1.12)">
<text x="0" y="0" font-size="20" fill="#1b1b1b" font-weight="normal" text-anchor="end" font-family="Liberation Mono" stroke="#1b1b1b" stroke-width="0.5">260.32</text>
</g>
<g transform="translate(904 675.4) scale(1 1.12)">
<text x="0" y="0" font-size="20" fill="#1b1b1b" font-weight="normal" text-anchor="end" font-family="Liberation Mono" stroke="#1b1b1b" stroke-width="0.5">258.59</text>
</g>
<g transform="translate(1006 675.4) scale(1 1.12)">
<text x="0" y="0" font-size="20" fill="#1b1b1b" font-weight="normal" text-anchor="end" font-family="Liberation Mono" stroke="#1b1b1b" stroke-width="0.5">206.03</text>
</g>
<g transform="translate(1107 675.4) scale(1 1.12)">
<text x="0" y="0" font-size="20" fill="#1b1b1b" font-weight="normal" text-anchor="end" font-family="Liberation Mono" stroke="#1b1b1b" stroke-width="0.5">206.37</text>
</g>
<text x="99" y="701.9" font-size="20.9" fill="#252423" font-weight="normal" text-anchor="start" font-family="Liberation Sans" >Juices</text>
<g transform="translate(381.5 701.9) scale(1 1.12)">
<text x="0" y="0" font-size="20" fill="#222" font-weight="normal" text-anchor="end" font-family="Liberation Mono" >67.56</text>
</g>
<g transform="translate(483 701.9) scale(1 1.12)">
<text x="0" y="0" font-size="20" fill="#222" font-weight="normal" text-anchor="end" font-family="Liberation Mono" >63.62</text>
</g>
<g transform="translate(585 701.9) scale(1 1.12)">
<text x="0" y="0" font-size="20" fill="#222" font-weight="normal" text-anchor="end" font-family="Liberation Mono" >91.76</text>
</g>
<g transform="translate(687 701.9) scale(1 1.12)">
<text x="0" y="0" font-size="20" fill="#222" font-weight="normal" text-anchor="end" font-family="Liberation Mono" >95.01</text>
</g>
<g transform="translate(788 701.9) scale(1 1.12)">
<text x="0" y="0" font-size="20" fill="#222" font-weight="normal" text-anchor="end" font-family="Liberation Mono" >89.22</text>
</g>
<g transform="translate(904 701.9) scale(1 1.12)">
<text x="0" y="0" font-size="20" fill="#222" font-weight="normal" text-anchor="end" font-family="Liberation Mono" >93.09</text>
</g>
<g transform="translate(1006 701.9) scale(1 1.12)">
<text x="0" y="0" font-size="20" fill="#222" font-weight="normal" text-anchor="end" font-family="Liberation Mono" >84.36</text>
</g>
<g transform="translate(1107 701.9) scale(1 1.12)">
<text x="0" y="0" font-size="20" fill="#222" font-weight="normal" text-anchor="end" font-family="Liberation Mono" >80.19</text>
</g>
<rect x="32.5" y="706" width="1083.5" height="26" fill="#f4f4f4" stroke="none" stroke-width="1" />
<text x="99" y="727.1999999999999" font-size="20.9" fill="#252423" font-weight="normal" text-anchor="start" font-family="Liberation Sans" >Mineral Water</text>
<g transform="translate(381.5 727.1999999999999) scale(1 1.12)">
<text x="0" y="0" font-size="20" fill="#222" font-weight="normal" text-anchor="end" font-family="Liberation Mono" >45.79</text>
</g>
<g transform="translate(483 727.1999999999999) scale(1 1.12)">
<text x="0" y="0" font-size="20" fill="#222" font-weight="normal" text-anchor="end" font-family="Liberation Mono" >40.56</text>
</g>
<g transform="translate(585 727.1999999999999) scale(1 1.12)">
<text x="0" y="0" font-size="20" fill="#222" font-weight="normal" text-anchor="end" font-family="Liberation Mono" >49.39</text>
</g>
<g transform="translate(687 727.1999999999999) scale(1 1.12)">
<text x="0" y="0" font-size="20" fill="#222" font-weight="normal" text-anchor="end" font-family="Liberation Mono" >52.73</text>
</g>
<g transform="translate(788 727.1999999999999) scale(1 1.12)">
<text x="0" y="0" font-size="20" fill="#222" font-weight="normal" text-anchor="end" font-family="Liberation Mono" >52.54</text>
</g>
<g transform="translate(904 727.1999999999999) scale(1 1.12)">
<text x="0" y="0" font-size="20" fill="#222" font-weight="normal" text-anchor="end" font-family="Liberation Mono" >57.04</text>
</g>
<g transform="translate(1006 727.1999999999999) scale(1 1.12)">
<text x="0" y="0" font-size="20" fill="#222" font-weight="normal" text-anchor="end" font-family="Liberation Mono" >43.94</text>
</g>
<g transform="translate(1107 727.1999999999999) scale(1 1.12)">
<text x="0" y="0" font-size="20" fill="#222" font-weight="normal" text-anchor="end" font-family="Liberation Mono" >44.40</text>
</g>
<text x="99" y="752.9" font-size="20.9" fill="#252423" font-weight="normal" text-anchor="start" font-family="Liberation Sans" >Soda</text>
<g transform="translate(381.5 752.9) scale(1 1.12)">
<text x="0" y="0" font-size="20" fill="#222" font-weight="normal" text-anchor="end" font-family="Liberation Mono" >46.36</text>
</g>
<g transform="translate(483 752.9) scale(1 1.12)">
<text x="0" y="0" font-size="20" fill="#222" font-weight="normal" text-anchor="end" font-family="Liberation Mono" >43.04</text>
</g>
<g transform="translate(585 752.9) scale(1 1.12)">
<text x="0" y="0" font-size="20" fill="#222" font-weight="normal" text-anchor="end" font-family="Liberation Mono" >63.98</text>
</g>
<g transform="translate(687 752.9) scale(1 1.12)">
<text x="0" y="0" font-size="20" fill="#222" font-weight="normal" text-anchor="end" font-family="Liberation Mono" >67.28</text>
</g>
<g transform="translate(788 752.9) scale(1 1.12)">
<text x="0" y="0" font-size="20" fill="#222" font-weight="normal" text-anchor="end" font-family="Liberation Mono" >85.88</text>
</g>
<g transform="translate(904 752.9) scale(1 1.12)">
<text x="0" y="0" font-size="20" fill="#222" font-weight="normal" text-anchor="end" font-family="Liberation Mono" >77.34</text>
</g>
<g transform="translate(1006 752.9) scale(1 1.12)">
<text x="0" y="0" font-size="20" fill="#222" font-weight="normal" text-anchor="end" font-family="Liberation Mono" >51.18</text>
</g>
<g transform="translate(1107 752.9) scale(1 1.12)">
<text x="0" y="0" font-size="20" fill="#222" font-weight="normal" text-anchor="end" font-family="Liberation Mono" >60.50</text>
</g>
<rect x="32.5" y="758" width="1083.5" height="24" fill="#f4f4f4" stroke="none" stroke-width="1" />
<text x="99" y="777.8" font-size="20.9" fill="#252423" font-weight="normal" text-anchor="start" font-family="Liberation Sans" >Sparkling Water</text>
<g transform="translate(381.5 777.8) scale(1 1.12)">
<text x="0" y="0" font-size="20" fill="#222" font-weight="normal" text-anchor="end" font-family="Liberation Mono" >9.35</text>
</g>
<g transform="translate(483 777.8) scale(1 1.12)">
<text x="0" y="0" font-size="20" fill="#222" font-weight="normal" text-anchor="end" font-family="Liberation Mono" >8.35</text>
</g>
<g transform="translate(585 777.8) scale(1 1.12)">
<text x="0" y="0" font-size="20" fill="#222" font-weight="normal" text-anchor="end" font-family="Liberation Mono" >8.59</text>
</g>
<g transform="translate(687 777.8) scale(1 1.12)">
<text x="0" y="0" font-size="20" fill="#222" font-weight="normal" text-anchor="end" font-family="Liberation Mono" >7.68</text>
</g>
<g transform="translate(788 777.8) scale(1 1.12)">
<text x="0" y="0" font-size="20" fill="#222" font-weight="normal" text-anchor="end" font-family="Liberation Mono" >7.85</text>
</g>
<g transform="translate(904 777.8) scale(1 1.12)">
<text x="0" y="0" font-size="20" fill="#222" font-weight="normal" text-anchor="end" font-family="Liberation Mono" >6.69</text>
</g>
<g transform="translate(1006 777.8) scale(1 1.12)">
<text x="0" y="0" font-size="20" fill="#222" font-weight="normal" text-anchor="end" font-family="Liberation Mono" >8.86</text>
</g>
<g transform="translate(1107 777.8) scale(1 1.12)">
<text x="0" y="0" font-size="20" fill="#222" font-weight="normal" text-anchor="end" font-family="Liberation Mono" >8.63</text>
</g>
<text x="99" y="803.6" font-size="20.9" fill="#252423" font-weight="normal" text-anchor="start" font-family="Liberation Sans" >Tea &amp; Coffee</text>
<g transform="translate(381.5 803.6) scale(1 1.12)">
<text x="0" y="0" font-size="20" fill="#222" font-weight="normal" text-anchor="end" font-family="Liberation Mono" >15.95</text>
</g>
<g transform="translate(483 803.6) scale(1 1.12)">
<text x="0" y="0" font-size="20" fill="#222" font-weight="normal" text-anchor="end" font-family="Liberation Mono" >13.61</text>
</g>
<g transform="translate(585 803.6) scale(1 1.12)">
<text x="0" y="0" font-size="20" fill="#222" font-weight="normal" text-anchor="end" font-family="Liberation Mono" >25.28</text>
</g>
<g transform="translate(687 803.6) scale(1 1.12)">
<text x="0" y="0" font-size="20" fill="#222" font-weight="normal" text-anchor="end" font-family="Liberation Mono" >20.77</text>
</g>
<g transform="translate(788 803.6) scale(1 1.12)">
<text x="0" y="0" font-size="20" fill="#222" font-weight="normal" text-anchor="end" font-family="Liberation Mono" >24.82</text>
</g>
<g transform="translate(904 803.6) scale(1 1.12)">
<text x="0" y="0" font-size="20" fill="#222" font-weight="normal" text-anchor="end" font-family="Liberation Mono" >24.43</text>
</g>
<g transform="translate(1006 803.6) scale(1 1.12)">
<text x="0" y="0" font-size="20" fill="#222" font-weight="normal" text-anchor="end" font-family="Liberation Mono" >17.69</text>
</g>
<g transform="translate(1107 803.6) scale(1 1.12)">
<text x="0" y="0" font-size="20" fill="#222" font-weight="normal" text-anchor="end" font-family="Liberation Mono" >12.66</text>
</g>
<rect x="32.5" y="808" width="1083.5" height="27" fill="#f4f4f4" stroke="none" stroke-width="1" />
<rect x="45.5" y="814.75" width="13.5" height="13.5" fill="none" stroke="#444" stroke-width="1.5" />
<line x1="48.7" y1="821.5" x2="55.8" y2="821.5" stroke="#444" stroke-width="1.5" />
<text x="71.5" y="830.6999999999999" font-size="19.9" fill="#1b1b1b" font-weight="bold" text-anchor="start" font-family="Liberation Sans" >United States</text>
<g transform="translate(381.5 830.6999999999999) scale(1 1.12)">
<text x="0" y="0" font-size="20" fill="#1b1b1b" font-weight="bold" text-anchor="end" font-family="Liberation Mono" >453.58</text>
</g>
<g transform="translate(483 830.6999999999999) scale(1 1.12)">
<text x="0" y="0" font-size="20" fill="#1b1b1b" font-weight="bold" text-anchor="end" font-family="Liberation Mono" >416.32</text>
</g>
<g transform="translate(585 830.6999999999999) scale(1 1.12)">
<text x="0" y="0" font-size="20" fill="#1b1b1b" font-weight="bold" text-anchor="end" font-family="Liberation Mono" >547.37</text>
</g>
<g transform="translate(687 830.6999999999999) scale(1 1.12)">
<text x="0" y="0" font-size="20" fill="#1b1b1b" font-weight="bold" text-anchor="end" font-family="Liberation Mono" >528.22</text>
</g>
<g transform="translate(788 830.6999999999999) scale(1 1.12)">
<text x="0" y="0" font-size="20" fill="#1b1b1b" font-weight="bold" text-anchor="end" font-family="Liberation Mono" >569.78</text>
</g>
<g transform="translate(904 830.6999999999999) scale(1 1.12)">
<text x="0" y="0" font-size="20" fill="#1b1b1b" font-weight="bold" text-anchor="end" font-family="Liberation Mono" >625.37</text>
</g>
<g transform="translate(1006 830.6999999999999) scale(1 1.12)">
<text x="0" y="0" font-size="20" fill="#1b1b1b" font-weight="bold" text-anchor="end" font-family="Liberation Mono" >450.53</text>
</g>
<g transform="translate(1107 830.6999999999999) scale(1 1.12)">
<text x="0" y="0" font-size="20" fill="#1b1b1b" font-weight="bold" text-anchor="end" font-family="Liberation Mono" >497.68</text>
</g>
<rect x="63.8" y="841.8" width="13.5" height="13.5" fill="none" stroke="#444" stroke-width="1.5" />
<line x1="67.0" y1="848.55" x2="74.1" y2="848.55" stroke="#444" stroke-width="1.5" />
<text x="89.5" y="857.6999999999999" font-size="20.2" fill="#1b1b1b" font-weight="normal" text-anchor="start" font-family="Liberation Sans" stroke="#1b1b1b" stroke-width="0.45">Central</text>
<g transform="translate(381.5 857.6999999999999) scale(1 1.12)">
<text x="0" y="0" font-size="20" fill="#1b1b1b" font-weight="normal" text-anchor="end" font-family="Liberation Mono" stroke="#1b1b1b" stroke-width="0.5">81.25</text>
</g>
<g transform="translate(483 857.6999999999999) scale(1 1.12)">
<text x="0" y="0" font-size="20" fill="#1b1b1b" font-weight="normal" text-anchor="end" font-family="Liberation Mono" stroke="#1b1b1b" stroke-width="0.5">74.46</text>
</g>
<g transform="translate(585 857.6999999999999) scale(1 1.12)">
<text x="0" y="0" font-size="20" fill="#1b1b1b" font-weight="normal" text-anchor="end" font-family="Liberation Mono" stroke="#1b1b1b" stroke-width="0.5">110.88</text>
</g>
<g transform="translate(687 857.6999999999999) scale(1 1.12)">
<text x="0" y="0" font-size="20" fill="#1b1b1b" font-weight="normal" text-anchor="end" font-family="Liberation Mono" stroke="#1b1b1b" stroke-width="0.5">91.91</text>
</g>
<g transform="translate(788 857.6999999999999) scale(1 1.12)">
<text x="0" y="0" font-size="20" fill="#1b1b1b" font-weight="normal" text-anchor="end" font-family="Liberation Mono" stroke="#1b1b1b" stroke-width="0.5">104.09</text>
</g>
<g transform="translate(904 857.6999999999999) scale(1 1.12)">
<text x="0" y="0" font-size="20" fill="#1b1b1b" font-weight="normal" text-anchor="end" font-family="Liberation Mono" stroke="#1b1b1b" stroke-width="0.5">128.15</text>
</g>
<g transform="translate(1006 857.6999999999999) scale(1 1.12)">
<text x="0" y="0" font-size="20" fill="#1b1b1b" font-weight="normal" text-anchor="end" font-family="Liberation Mono" stroke="#1b1b1b" stroke-width="0.5">92.80</text>
</g>
<g transform="translate(1107 857.6999999999999) scale(1 1.12)">
<text x="0" y="0" font-size="20" fill="#1b1b1b" font-weight="normal" text-anchor="end" font-family="Liberation Mono" stroke="#1b1b1b" stroke-width="0.5">104.09</text>
</g>
<rect x="32.5" y="862" width="1083.5" height="26" fill="#f4f4f4" stroke="none" stroke-width="1" />
<text x="99" y="883.0" font-size="20.9" fill="#252423" font-weight="normal" text-anchor="start" font-family="Liberation Sans" >Juices</text>
<g transform="translate(381.5 883.0) scale(1 1.12)">
<text x="0" y="0" font-size="20" fill="#222" font-weight="normal" text-anchor="end" font-family="Liberation Mono" >33.10</text>
</g>
<g transform="translate(483 883.0) scale(1 1.12)">
<text x="0" y="0" font-size="20" fill="#222" font-weight="normal" text-anchor="end" font-family="Liberation Mono" >25.11</text>
</g>
<g transform="translate(585 883.0) scale(1 1.12)">
<text x="0" y="0" font-size="20" fill="#222" font-weight="normal" text-anchor="end" font-family="Liberation Mono" >47.34</text>
</g>
<g transform="translate(687 883.0) scale(1 1.12)">
<text x="0" y="0" font-size="20" fill="#222" font-weight="normal" text-anchor="end" font-family="Liberation Mono" >29.12</text>
</g>
<g transform="translate(788 883.0) scale(1 1.12)">
<text x="0" y="0" font-size="20" fill="#222" font-weight="normal" text-anchor="end" font-family="Liberation Mono" >33.42</text>
</g>
<g transform="translate(904 883.0) scale(1 1.12)">
<text x="0" y="0" font-size="20" fill="#222" font-weight="normal" text-anchor="end" font-family="Liberation Mono" >48.38</text>
</g>
<g transform="translate(1006 883.0) scale(1 1.12)">
<text x="0" y="0" font-size="20" fill="#222" font-weight="normal" text-anchor="end" font-family="Liberation Mono" >34.18</text>
</g>
<g transform="translate(1107 883.0) scale(1 1.12)">
<text x="0" y="0" font-size="20" fill="#222" font-weight="normal" text-anchor="end" font-family="Liberation Mono" >55.45</text>
</g>
<text x="99" y="909.0" font-size="20.9" fill="#252423" font-weight="normal" text-anchor="start" font-family="Liberation Sans" >Mineral Water</text>
<g transform="translate(381.5 909.0) scale(1 1.12)">
<text x="0" y="0" font-size="20" fill="#222" font-weight="normal" text-anchor="end" font-family="Liberation Mono" >17.28</text>
</g>
<g transform="translate(483 909.0) scale(1 1.12)">
<text x="0" y="0" font-size="20" fill="#222" font-weight="normal" text-anchor="end" font-family="Liberation Mono" >16.98</text>
</g>
<g transform="translate(585 909.0) scale(1 1.12)">
<text x="0" y="0" font-size="20" fill="#222" font-weight="normal" text-anchor="end" font-family="Liberation Mono" >23.08</text>
</g>
<g transform="translate(687 909.0) scale(1 1.12)">
<text x="0" y="0" font-size="20" fill="#222" font-weight="normal" text-anchor="end" font-family="Liberation Mono" >22.78</text>
</g>
<g transform="translate(788 909.0) scale(1 1.12)">
<text x="0" y="0" font-size="20" fill="#222" font-weight="normal" text-anchor="end" font-family="Liberation Mono" >24.12</text>
</g>
<g transform="translate(904 909.0) scale(1 1.12)">
<text x="0" y="0" font-size="20" fill="#222" font-weight="normal" text-anchor="end" font-family="Liberation Mono" >22.87</text>
</g>
<g transform="translate(1006 909.0) scale(1 1.12)">
<text x="0" y="0" font-size="20" fill="#222" font-weight="normal" text-anchor="end" font-family="Liberation Mono" >19.48</text>
</g>
<g transform="translate(1107 909.0) scale(1 1.12)">
<text x="0" y="0" font-size="20" fill="#222" font-weight="normal" text-anchor="end" font-family="Liberation Mono" >18.80</text>
</g>
<rect x="32.5" y="914" width="1083.5" height="24" fill="#f4f4f4" stroke="none" stroke-width="1" />
<text x="99" y="933.6" font-size="20.9" fill="#252423" font-weight="normal" text-anchor="start" font-family="Liberation Sans" >Soda</text>
<g transform="translate(381.5 933.6) scale(1 1.12)">
<text x="0" y="0" font-size="20" fill="#222" font-weight="normal" text-anchor="end" font-family="Liberation Mono" >20.30</text>
</g>
<g transform="translate(483 933.6) scale(1 1.12)">
<text x="0" y="0" font-size="20" fill="#222" font-weight="normal" text-anchor="end" font-family="Liberation Mono" >23.52</text>
</g>
<g transform="translate(585 933.6) scale(1 1.12)">
<text x="0" y="0" font-size="20" fill="#222" font-weight="normal" text-anchor="end" font-family="Liberation Mono" >28.23</text>
</g>
<g transform="translate(687 933.6) scale(1 1.12)">
<text x="0" y="0" font-size="20" fill="#222" font-weight="normal" text-anchor="end" font-family="Liberation Mono" >28.45</text>
</g>
<g transform="translate(788 933.6) scale(1 1.12)">
<text x="0" y="0" font-size="20" fill="#222" font-weight="normal" text-anchor="end" font-family="Liberation Mono" >33.41</text>
</g>
<g transform="translate(904 933.6) scale(1 1.12)">
<text x="0" y="0" font-size="20" fill="#222" font-weight="normal" text-anchor="end" font-family="Liberation Mono" >42.33</text>
</g>
<g transform="translate(1006 933.6) scale(1 1.12)">
<text x="0" y="0" font-size="20" fill="#222" font-weight="normal" text-anchor="end" font-family="Liberation Mono" >26.59</text>
</g>
<g transform="translate(1107 933.6) scale(1 1.12)">
<text x="0" y="0" font-size="20" fill="#222" font-weight="normal" text-anchor="end" font-family="Liberation Mono" >18.39</text>
</g>
<text x="99" y="959.6" font-size="20.9" fill="#252423" font-weight="normal" text-anchor="start" font-family="Liberation Sans" >Sparkling Water</text>
<g transform="translate(381.5 959.6) scale(1 1.12)">
<text x="0" y="0" font-size="20" fill="#222" font-weight="normal" text-anchor="end" font-family="Liberation Mono" >3.72</text>
</g>
<g transform="translate(483 959.6) scale(1 1.12)">
<text x="0" y="0" font-size="20" fill="#222" font-weight="normal" text-anchor="end" font-family="Liberation Mono" >3.63</text>
</g>
<g transform="translate(585 959.6) scale(1 1.12)">
<text x="0" y="0" font-size="20" fill="#222" font-weight="normal" text-anchor="end" font-family="Liberation Mono" >3.47</text>
</g>
<g transform="translate(687 959.6) scale(1 1.12)">
<text x="0" y="0" font-size="20" fill="#222" font-weight="normal" text-anchor="end" font-family="Liberation Mono" >3.02</text>
</g>
<g transform="translate(788 959.6) scale(1 1.12)">
<text x="0" y="0" font-size="20" fill="#222" font-weight="normal" text-anchor="end" font-family="Liberation Mono" >2.84</text>
</g>
<g transform="translate(904 959.6) scale(1 1.12)">
<text x="0" y="0" font-size="20" fill="#222" font-weight="normal" text-anchor="end" font-family="Liberation Mono" >3.31</text>
</g>
<g transform="translate(1006 959.6) scale(1 1.12)">
<text x="0" y="0" font-size="20" fill="#222" font-weight="normal" text-anchor="end" font-family="Liberation Mono" >3.64</text>
</g>
<g transform="translate(1107 959.6) scale(1 1.12)">
<text x="0" y="0" font-size="20" fill="#222" font-weight="normal" text-anchor="end" font-family="Liberation Mono" >3.90</text>
</g>
<rect x="32.5" y="964" width="1083.5" height="26" fill="#f4f4f4" stroke="none" stroke-width="1" />
<text x="99" y="984.9" font-size="20.9" fill="#252423" font-weight="normal" text-anchor="start" font-family="Liberation Sans" >Tea &amp; Coffee</text>
<g transform="translate(381.5 984.9) scale(1 1.12)">
<text x="0" y="0" font-size="20" fill="#222" font-weight="normal" text-anchor="end" font-family="Liberation Mono" >6.85</text>
</g>
<g transform="translate(483 984.9) scale(1 1.12)">
<text x="0" y="0" font-size="20" fill="#222" font-weight="normal" text-anchor="end" font-family="Liberation Mono" >5.23</text>
</g>
<g transform="translate(585 984.9) scale(1 1.12)">
<text x="0" y="0" font-size="20" fill="#222" font-weight="normal" text-anchor="end" font-family="Liberation Mono" >8.76</text>
</g>
<g transform="translate(687 984.9) scale(1 1.12)">
<text x="0" y="0" font-size="20" fill="#222" font-weight="normal" text-anchor="end" font-family="Liberation Mono" >8.53</text>
</g>
<g transform="translate(788 984.9) scale(1 1.12)">
<text x="0" y="0" font-size="20" fill="#222" font-weight="normal" text-anchor="end" font-family="Liberation Mono" >10.30</text>
</g>
<g transform="translate(904 984.9) scale(1 1.12)">
<text x="0" y="0" font-size="20" fill="#222" font-weight="normal" text-anchor="end" font-family="Liberation Mono" >11.27</text>
</g>
<g transform="translate(1006 984.9) scale(1 1.12)">
<text x="0" y="0" font-size="20" fill="#222" font-weight="normal" text-anchor="end" font-family="Liberation Mono" >8.91</text>
</g>
<g transform="translate(1107 984.9) scale(1 1.12)">
<text x="0" y="0" font-size="20" fill="#222" font-weight="normal" text-anchor="end" font-family="Liberation Mono" >7.54</text>
</g>
<rect x="63.8" y="995.9" width="13.5" height="13.5" fill="none" stroke="#444" stroke-width="1.5" />
<line x1="67.0" y1="1002.65" x2="74.1" y2="1002.65" stroke="#444" stroke-width="1.5" />
<text x="89.5" y="1011.6999999999999" font-size="20.2" fill="#1b1b1b" font-weight="normal" text-anchor="start" font-family="Liberation Sans" stroke="#1b1b1b" stroke-width="0.45">East</text>
<g transform="translate(381.5 1011.6999999999999) scale(1 1.12)">
<text x="0" y="0" font-size="20" fill="#1b1b1b" font-weight="normal" text-anchor="end" font-family="Liberation Mono" stroke="#1b1b1b" stroke-width="0.5">181.54</text>
</g>
<g transform="translate(483 1011.6999999999999) scale(1 1.12)">
<text x="0" y="0" font-size="20" fill="#1b1b1b" font-weight="normal" text-anchor="end" font-family="Liberation Mono" stroke="#1b1b1b" stroke-width="0.5">156.12</text>
</g>
<g transform="translate(585 1011.6999999999999) scale(1 1.12)">
<text x="0" y="0" font-size="20" fill="#1b1b1b" font-weight="normal" text-anchor="end" font-family="Liberation Mono" stroke="#1b1b1b" stroke-width="0.5">208.25</text>
</g>
<g transform="translate(687 1011.6999999999999) scale(1 1.12)">
<text x="0" y="0" font-size="20" fill="#1b1b1b" font-weight="normal" text-anchor="end" font-family="Liberation Mono" stroke="#1b1b1b" stroke-width="0.5">201.82</text>
</g>
<g transform="translate(788 1011.6999999999999) scale(1 1.12)">
<text x="0" y="0" font-size="20" fill="#1b1b1b" font-weight="normal" text-anchor="end" font-family="Liberation Mono" stroke="#1b1b1b" stroke-width="0.5">216.49</text>
</g>
<g transform="translate(904 1011.6999999999999) scale(1 1.12)">
<text x="0" y="0" font-size="20" fill="#1b1b1b" font-weight="normal" text-anchor="end" font-family="Liberation Mono" stroke="#1b1b1b" stroke-width="0.5">249.98</text>
</g>
<g transform="translate(1006 1011.6999999999999) scale(1 1.12)">
<text x="0" y="0" font-size="20" fill="#1b1b1b" font-weight="normal" text-anchor="end" font-family="Liberation Mono" stroke="#1b1b1b" stroke-width="0.5">174.48</text>
</g>
<g transform="translate(1107 1011.6999999999999) scale(1 1.12)">
<text x="0" y="0" font-size="20" fill="#1b1b1b" font-weight="normal" text-anchor="end" font-family="Liberation Mono" stroke="#1b1b1b" stroke-width="0.5">195.46</text>
</g>
<rect x="32.5" y="1016" width="1083.5" height="26" fill="#f4f4f4" stroke="none" stroke-width="1" />
<text x="99" y="1037.2" font-size="20.9" fill="#252423" font-weight="normal" text-anchor="start" font-family="Liberation Sans" >Juices</text>
<g transform="translate(381.5 1037.2) scale(1 1.12)">
<text x="0" y="0" font-size="20" fill="#222" font-weight="normal" text-anchor="end" font-family="Liberation Mono" >66.41</text>
</g>
<g transform="translate(483 1037.2) scale(1 1.12)">
<text x="0" y="0" font-size="20" fill="#222" font-weight="normal" text-anchor="end" font-family="Liberation Mono" >55.31</text>
</g>
<g transform="translate(585 1037.2) scale(1 1.12)">
<text x="0" y="0" font-size="20" fill="#222" font-weight="normal" text-anchor="end" font-family="Liberation Mono" >78.32</text>
</g>
<g transform="translate(687 1037.2) scale(1 1.12)">
<text x="0" y="0" font-size="20" fill="#222" font-weight="normal" text-anchor="end" font-family="Liberation Mono" >67.16</text>
</g>
<g transform="translate(788 1037.2) scale(1 1.12)">
<text x="0" y="0" font-size="20" fill="#222" font-weight="normal" text-anchor="end" font-family="Liberation Mono" >71.26</text>
</g>
<g transform="translate(904 1037.2) scale(1 1.12)">
<text x="0" y="0" font-size="20" fill="#222" font-weight="normal" text-anchor="end" font-family="Liberation Mono" >85.04</text>
</g>
<g transform="translate(1006 1037.2) scale(1 1.12)">
<text x="0" y="0" font-size="20" fill="#222" font-weight="normal" text-anchor="end" font-family="Liberation Mono" >63.61</text>
</g>
<g transform="translate(1107 1037.2) scale(1 1.12)">
<text x="0" y="0" font-size="20" fill="#222" font-weight="normal" text-anchor="end" font-family="Liberation Mono" >72.85</text>
</g>
<text x="99" y="1062.5" font-size="20.9" fill="#252423" font-weight="normal" text-anchor="start" font-family="Liberation Sans" >Mineral Water</text>
<g transform="translate(381.5 1062.5) scale(1 1.12)">
<text x="0" y="0" font-size="20" fill="#222" font-weight="normal" text-anchor="end" font-family="Liberation Mono" >46.42</text>
</g>
<g transform="translate(483 1062.5) scale(1 1.12)">
<text x="0" y="0" font-size="20" fill="#222" font-weight="normal" text-anchor="end" font-family="Liberation Mono" >45.77</text>
</g>
<g transform="translate(585 1062.5) scale(1 1.12)">
<text x="0" y="0" font-size="20" fill="#222" font-weight="normal" text-anchor="end" font-family="Liberation Mono" >53.98</text>
</g>
<g transform="translate(687 1062.5) scale(1 1.12)">
<text x="0" y="0" font-size="20" fill="#222" font-weight="normal" text-anchor="end" font-family="Liberation Mono" >53.41</text>
</g>
<g transform="translate(788 1062.5) scale(1 1.12)">
<text x="0" y="0" font-size="20" fill="#222" font-weight="normal" text-anchor="end" font-family="Liberation Mono" >56.61</text>
</g>
<g transform="translate(904 1062.5) scale(1 1.12)">
<text x="0" y="0" font-size="20" fill="#222" font-weight="normal" text-anchor="end" font-family="Liberation Mono" >58.39</text>
</g>
<g transform="translate(1006 1062.5) scale(1 1.12)">
<text x="0" y="0" font-size="20" fill="#222" font-weight="normal" text-anchor="end" font-family="Liberation Mono" >42.82</text>
</g>
<g transform="translate(1107 1062.5) scale(1 1.12)">
<text x="0" y="0" font-size="20" fill="#222" font-weight="normal" text-anchor="end" font-family="Liberation Mono" >48.35</text>
</g>
<rect x="32.5" y="1067" width="1083.5" height="26" fill="#f4f4f4" stroke="none" stroke-width="1" />
<text x="99" y="1088.1000000000001" font-size="20.9" fill="#252423" font-weight="normal" text-anchor="start" font-family="Liberation Sans" >Soda</text>
<g transform="translate(381.5 1088.1000000000001) scale(1 1.12)">
<text x="0" y="0" font-size="20" fill="#222" font-weight="normal" text-anchor="end" font-family="Liberation Mono" >46.51</text>
</g>
<g transform="translate(483 1088.1000000000001) scale(1 1.12)">
<text x="0" y="0" font-size="20" fill="#222" font-weight="normal" text-anchor="end" font-family="Liberation Mono" >36.53</text>
</g>
<g transform="translate(585 1088.1000000000001) scale(1 1.12)">
<text x="0" y="0" font-size="20" fill="#222" font-weight="normal" text-anchor="end" font-family="Liberation Mono" >44.89</text>
</g>
<g transform="translate(687 1088.1000000000001) scale(1 1.12)">
<text x="0" y="0" font-size="20" fill="#222" font-weight="normal" text-anchor="end" font-family="Liberation Mono" >57.59</text>
</g>
<g transform="translate(788 1088.1000000000001) scale(1 1.12)">
<text x="0" y="0" font-size="20" fill="#222" font-weight="normal" text-anchor="end" font-family="Liberation Mono" >56.67</text>
</g>
<g transform="translate(904 1088.1000000000001) scale(1 1.12)">
<text x="0" y="0" font-size="20" fill="#222" font-weight="normal" text-anchor="end" font-family="Liberation Mono" >75.05</text>
</g>
<g transform="translate(1006 1088.1000000000001) scale(1 1.12)">
<text x="0" y="0" font-size="20" fill="#222" font-weight="normal" text-anchor="end" font-family="Liberation Mono" >47.52</text>
</g>
<g transform="translate(1107 1088.1000000000001) scale(1 1.12)">
<text x="0" y="0" font-size="20" fill="#222" font-weight="normal" text-anchor="end" font-family="Liberation Mono" >50.76</text>
</g>
<text x="99" y="1113.4" font-size="20.9" fill="#252423" font-weight="normal" text-anchor="start" font-family="Liberation Sans" >Sparkling Water</text>
<g transform="translate(381.5 1113.4) scale(1 1.12)">
<text x="0" y="0" font-size="20" fill="#222" font-weight="normal" text-anchor="end" font-family="Liberation Mono" >9.99</text>
</g>
<g transform="translate(483 1113.4) scale(1 1.12)">
<text x="0" y="0" font-size="20" fill="#222" font-weight="normal" text-anchor="end" font-family="Liberation Mono" >10.31</text>
</g>
<g transform="translate(585 1113.4) scale(1 1.12)">
<text x="0" y="0" font-size="20" fill="#222" font-weight="normal" text-anchor="end" font-family="Liberation Mono" >8.36</text>
</g>
<g transform="translate(687 1113.4) scale(1 1.12)">
<text x="0" y="0" font-size="20" fill="#222" font-weight="normal" text-anchor="end" font-family="Liberation Mono" >8.11</text>
</g>
<g transform="translate(788 1113.4) scale(1 1.12)">
<text x="0" y="0" font-size="20" fill="#222" font-weight="normal" text-anchor="end" font-family="Liberation Mono" >8.32</text>
</g>
<g transform="translate(904 1113.4) scale(1 1.12)">
<text x="0" y="0" font-size="20" fill="#222" font-weight="normal" text-anchor="end" font-family="Liberation Mono" >7.81</text>
</g>
<g transform="translate(1006 1113.4) scale(1 1.12)">
<text x="0" y="0" font-size="20" fill="#222" font-weight="normal" text-anchor="end" font-family="Liberation Mono" >10.40</text>
</g>
<g transform="translate(1107 1113.4) scale(1 1.12)">
<text x="0" y="0" font-size="20" fill="#222" font-weight="normal" text-anchor="end" font-family="Liberation Mono" >9.60</text>
</g>
<rect x="32.5" y="1118" width="1083.5" height="26" fill="#f4f4f4" stroke="none" stroke-width="1" />
<text x="99" y="1138.9" font-size="20.9" fill="#252423" font-weight="normal" text-anchor="start" font-family="Liberation Sans" >Tea &amp; Coffee</text>
<g transform="translate(381.5 1138.9) scale(1 1.12)">
<text x="0" y="0" font-size="20" fill="#222" font-weight="normal" text-anchor="end" font-family="Liberation Mono" >12.22</text>
</g>
<g transform="translate(483 1138.9) scale(1 1.12)">
<text x="0" y="0" font-size="20" fill="#222" font-weight="normal" text-anchor="end" font-family="Liberation Mono" >8.19</text>
</g>
<g transform="translate(585 1138.9) scale(1 1.12)">
<text x="0" y="0" font-size="20" fill="#222" font-weight="normal" text-anchor="end" font-family="Liberation Mono" >22.71</text>
</g>
<g transform="translate(687 1138.9) scale(1 1.12)">
<text x="0" y="0" font-size="20" fill="#222" font-weight="normal" text-anchor="end" font-family="Liberation Mono" >15.56</text>
</g>
<g transform="translate(788 1138.9) scale(1 1.12)">
<text x="0" y="0" font-size="20" fill="#222" font-weight="normal" text-anchor="end" font-family="Liberation Mono" >23.63</text>
</g>
<g transform="translate(904 1138.9) scale(1 1.12)">
<text x="0" y="0" font-size="20" fill="#222" font-weight="normal" text-anchor="end" font-family="Liberation Mono" >23.67</text>
</g>
<g transform="translate(1006 1138.9) scale(1 1.12)">
<text x="0" y="0" font-size="20" fill="#222" font-weight="normal" text-anchor="end" font-family="Liberation Mono" >10.12</text>
</g>
<g transform="translate(1107 1138.9) scale(1 1.12)">
<text x="0" y="0" font-size="20" fill="#222" font-weight="normal" text-anchor="end" font-family="Liberation Mono" >13.90</text>
</g>
<rect x="63.8" y="1150.25" width="13.5" height="13.5" fill="none" stroke="#444" stroke-width="1.5" />
<line x1="67.0" y1="1157.0" x2="74.1" y2="1157.0" stroke="#444" stroke-width="1.5" />
<text x="89.5" y="1166.4" font-size="20.2" fill="#1b1b1b" font-weight="normal" text-anchor="start" font-family="Liberation Sans" stroke="#1b1b1b" stroke-width="0.45">Midwest</text>
<g transform="translate(381.5 1166.4) scale(1 1.12)">
<text x="0" y="0" font-size="20" fill="#1b1b1b" font-weight="normal" text-anchor="end" font-family="Liberation Mono" stroke="#1b1b1b" stroke-width="0.5">69.39</text>
</g>
<g transform="translate(483 1166.4) scale(1 1.12)">
<text x="0" y="0" font-size="20" fill="#1b1b1b" font-weight="normal" text-anchor="end" font-family="Liberation Mono" stroke="#1b1b1b" stroke-width="0.5">75.82</text>
</g>
<g transform="translate(585 1166.4) scale(1 1.12)">
<text x="0" y="0" font-size="20" fill="#1b1b1b" font-weight="normal" text-anchor="end" font-family="Liberation Mono" stroke="#1b1b1b" stroke-width="0.5">85.32</text>
</g>
<g transform="translate(687 1166.4) scale(1 1.12)">
<text x="0" y="0" font-size="20" fill="#1b1b1b" font-weight="normal" text-anchor="end" font-family="Liberation Mono" stroke="#1b1b1b" stroke-width="0.5">90.78</text>
</g>
<g transform="translate(788 1166.4) scale(1 1.12)">
<text x="0" y="0" font-size="20" fill="#1b1b1b" font-weight="normal" text-anchor="end" font-family="Liberation Mono" stroke="#1b1b1b" stroke-width="0.5">101.32</text>
</g>
<g transform="translate(904 1166.4) scale(1 1.12)">
<text x="0" y="0" font-size="20" fill="#1b1b1b" font-weight="normal" text-anchor="end" font-family="Liberation Mono" stroke="#1b1b1b" stroke-width="0.5">95.17</text>
</g>
<g transform="translate(1006 1166.4) scale(1 1.12)">
<text x="0" y="0" font-size="20" fill="#1b1b1b" font-weight="normal" text-anchor="end" font-family="Liberation Mono" stroke="#1b1b1b" stroke-width="0.5">72.59</text>
</g>
<g transform="translate(1107 1166.4) scale(1 1.12)">
<text x="0" y="0" font-size="20" fill="#1b1b1b" font-weight="normal" text-anchor="end" font-family="Liberation Mono" stroke="#1b1b1b" stroke-width="0.5">73.43</text>
</g>
<rect x="32.5" y="1171" width="1083.5" height="25" fill="#f4f4f4" stroke="none" stroke-width="1" />
<text x="99" y="1191.8000000000002" font-size="20.9" fill="#252423" font-weight="normal" text-anchor="start" font-family="Liberation Sans" >Juices</text>
<g transform="translate(381.5 1191.8000000000002) scale(1 1.12)">
<text x="0" y="0" font-size="20" fill="#222" font-weight="normal" text-anchor="end" font-family="Liberation Mono" >28.67</text>
</g>
<g transform="translate(483 1191.8000000000002) scale(1 1.12)">
<text x="0" y="0" font-size="20" fill="#222" font-weight="normal" text-anchor="end" font-family="Liberation Mono" >36.71</text>
</g>
<g transform="translate(585 1191.8000000000002) scale(1 1.12)">
<text x="0" y="0" font-size="20" fill="#222" font-weight="normal" text-anchor="end" font-family="Liberation Mono" >38.09</text>
</g>
<g transform="translate(687 1191.8000000000002) scale(1 1.12)">
<text x="0" y="0" font-size="20" fill="#222" font-weight="normal" text-anchor="end" font-family="Liberation Mono" >43.64</text>
</g>
<g transform="translate(788 1191.8000000000002) scale(1 1.12)">
<text x="0" y="0" font-size="20" fill="#222" font-weight="normal" text-anchor="end" font-family="Liberation Mono" >51.63</text>
</g>
<g transform="translate(904 1191.8000000000002) scale(1 1.12)">
<text x="0" y="0" font-size="20" fill="#222" font-weight="normal" text-anchor="end" font-family="Liberation Mono" >45.01</text>
</g>
<g transform="translate(1006 1191.8000000000002) scale(1 1.12)">
<text x="0" y="0" font-size="20" fill="#222" font-weight="normal" text-anchor="end" font-family="Liberation Mono" >31.74</text>
</g>
<g transform="translate(1107 1191.8000000000002) scale(1 1.12)">
<text x="0" y="0" font-size="20" fill="#222" font-weight="normal" text-anchor="end" font-family="Liberation Mono" >33.09</text>
</g>
<text x="99" y="1216.7" font-size="20.9" fill="#252423" font-weight="normal" text-anchor="start" font-family="Liberation Sans" >Mineral Water</text>
<g transform="translate(381.5 1216.7) scale(1 1.12)">
<text x="0" y="0" font-size="20" fill="#222" font-weight="normal" text-anchor="end" font-family="Liberation Mono" >15.22</text>
</g>
<g transform="translate(483 1216.7) scale(1 1.12)">
<text x="0" y="0" font-size="20" fill="#222" font-weight="normal" text-anchor="end" font-family="Liberation Mono" >14.54</text>
</g>
<g transform="translate(585 1216.7) scale(1 1.12)">
<text x="0" y="0" font-size="20" fill="#222" font-weight="normal" text-anchor="end" font-family="Liberation Mono" >18.43</text>
</g>
<g transform="translate(687 1216.7) scale(1 1.12)">
<text x="0" y="0" font-size="20" fill="#222" font-weight="normal" text-anchor="end" font-family="Liberation Mono" >17.39</text>
</g>
<g transform="translate(788 1216.7) scale(1 1.12)">
<text x="0" y="0" font-size="20" fill="#222" font-weight="normal" text-anchor="end" font-family="Liberation Mono" >18.50</text>
</g>
<g transform="translate(904 1216.7) scale(1 1.12)">
<text x="0" y="0" font-size="20" fill="#222" font-weight="normal" text-anchor="end" font-family="Liberation Mono" >19.88</text>
</g>
<g transform="translate(1006 1216.7) scale(1 1.12)">
<text x="0" y="0" font-size="20" fill="#222" font-weight="normal" text-anchor="end" font-family="Liberation Mono" >16.19</text>
</g>
<g transform="translate(1107 1216.7) scale(1 1.12)">
<text x="0" y="0" font-size="20" fill="#222" font-weight="normal" text-anchor="end" font-family="Liberation Mono" >15.37</text>
</g>
<line x1="289.5" y1="323" x2="289.5" y2="1221.3" stroke="#a8a8a8" stroke-width="1.6" />
<line x1="391.0" y1="370" x2="391.0" y2="1221.3" stroke="#e1e1e1" stroke-width="1" />
<line x1="492.5" y1="323" x2="492.5" y2="1221.3" stroke="#e1e1e1" stroke-width="1" />
<line x1="594.5" y1="370" x2="594.5" y2="1221.3" stroke="#e1e1e1" stroke-width="1" />
<line x1="696.5" y1="323" x2="696.5" y2="1221.3" stroke="#e1e1e1" stroke-width="1" />
<line x1="797.5" y1="370" x2="797.5" y2="1221.3" stroke="#e1e1e1" stroke-width="1" />
<line x1="913.5" y1="323" x2="913.5" y2="1221.3" stroke="#e1e1e1" stroke-width="1" />
<line x1="1015.5" y1="370" x2="1015.5" y2="1221.3" stroke="#e1e1e1" stroke-width="1" />
<line x1="1116.5" y1="323" x2="1116.5" y2="1221.3" stroke="#e1e1e1" stroke-width="1" />
<line x1="32.5" y1="370" x2="32.5" y2="1221.3" stroke="#dcdcdc" stroke-width="1" />
<line x1="32" y1="427.2" x2="1116" y2="427.2" stroke="#a8a8a8" stroke-width="1.6" />
<line x1="32" y1="1221" x2="1116" y2="1221" stroke="#c8c8c8" stroke-width="1.2" />
<rect x="909.5" y="370" width="4" height="57" fill="#f2cf5b" stroke="none" stroke-width="1" />
<rect x="12.5" y="1193.5" width="24" height="32" fill="#f8f8f8" stroke="#e0e0e0" stroke-width="1" filter="url(#sh)"/>
<circle cx="21.5" cy="1202.5" r="1.4" fill="#555"/>
<circle cx="21.5" cy="1208.5" r="1.4" fill="#555"/>
<circle cx="21.5" cy="1214.5" r="1.4" fill="#555"/>
<circle cx="27" cy="1202.5" r="1.4" fill="#555"/>
<circle cx="27" cy="1208.5" r="1.4" fill="#555"/>
<circle cx="27" cy="1214.5" r="1.4" fill="#555"/>
<line x1="7" y1="1246.5" x2="1759" y2="1246.5" stroke="#e3e3e3" stroke-width="2" />
<text x="6" y="1276.8" font-size="21.3" fill="#252423" font-weight="normal" text-anchor="start" font-family="Liberation Sans" >Total rows: 39</text>
<path d="M1021.66 1268.94L1021.66 1275.06L1017.83 1275.70L1017.56 1276.33L1019.82 1279.50L1015.50 1283.82L1012.33 1281.56L1011.70 1281.83L1011.06 1285.66L1004.94 1285.66L1004.30 1281.83L1003.67 1281.56L1000.50 1283.82L996.18 1279.50L998.44 1276.33L998.17 1275.70L994.34 1275.06L994.34 1268.94L998.17 1268.30L998.44 1267.67L996.18 1264.50L1000.50 1260.18L1003.67 1262.44L1004.30 1262.17L1004.94 1258.34L1011.06 1258.34L1011.70 1262.17L1012.33 1262.44L1015.50 1260.18L1019.82 1264.50L1017.56 1267.67L1017.83 1268.30Z" stroke="#444" fill="none" stroke-width="1.6" stroke-linejoin="round"/>
<circle cx="1008" cy="1272" r="5.5" fill="none" stroke="#1f5aa6" stroke-width="1.9000000000000001"/>
<line x1="1043" y1="1273" x2="1061" y2="1273" stroke="#333" stroke-width="1.8" />
<rect x="1077.5" y="1258" width="97.5" height="35" fill="#fff" stroke="#9a9a9a" stroke-width="1.4" />
<g transform="translate(1098 1283.2) scale(1 1.15)">
<text x="0" y="0" font-size="19" fill="#252423" font-weight="normal" text-anchor="start" font-family="Liberation Mono" >100 %</text>
</g>
<line x1="1186" y1="1274" x2="1205.5" y2="1274" stroke="#333" stroke-width="1.8" />
<line x1="1195.7" y1="1264" x2="1195.7" y2="1284" stroke="#333" stroke-width="1.8" />
<path d="M1259.5 1262V1280M1277 1262L1268.5 1271L1277 1280" stroke="#a0a0a0" fill="none" stroke-width="1.8" />
<path d="M1300 1262L1291.5 1271L1300 1280" stroke="#a0a0a0" fill="none" stroke-width="1.8" />
<text transform="translate(1310 1277.3) scale(1 1.1)" font-size="19.5" fill="#252423" font-weight="normal" text-anchor="start" font-family="Liberation Sans" >Page</text>
<rect x="1363" y="1253.5" width="45" height="35" fill="#fff" stroke="#dcdcdc" stroke-width="1" />
<text x="1385.5" y="1277.3" font-size="21" fill="#252423" font-weight="normal" text-anchor="middle" font-family="Liberation Sans" >1</text>
<text x="1415" y="1277.3" font-size="21" fill="#252423" font-weight="normal" text-anchor="start" font-family="Liberation Sans" >of 2</text>
<path d="M1462.5 1262L1471.5 1271L1462.5 1280" stroke="#252423" fill="none" stroke-width="2.4" />
<path d="M1485 1262L1494 1271L1485 1280M1502 1262V1280" stroke="#252423" fill="none" stroke-width="2.4" />
<g transform="translate(1588.5 1277.3) scale(1 1.2)">
<text x="0" y="0" font-size="17.8" fill="#252423" font-weight="normal" text-anchor="start" font-family="Liberation Mono" >1 to 30 of 39</text>
</g>
<rect x="1760" y="210" width="534.5" height="1084.5" fill="#f4f4f4" stroke="none" stroke-width="1" />
<line x1="1760.5" y1="30" x2="1760.5" y2="1294" stroke="#e6e6e6" stroke-width="1" />
<rect x="1756" y="30" width="4" height="1264" fill="url(#lg)"/>
<defs><linearGradient id="lg" x1="0" x2="1"><stop offset="0" stop-color="#fff" stop-opacity="0"/><stop offset="1" stop-color="#000" stop-opacity="0.10"/></linearGradient></defs>
<line x1="2294.5" y1="30" x2="2294.5" y2="1294" stroke="#e8e8e8" stroke-width="1" />
<line x1="1760" y1="209.5" x2="2294" y2="209.5" stroke="#e1e1e1" stroke-width="1.2" />
<path d="M2199 6.5H2220L2211.5 16V24.5H2207.5V16Z" stroke="#666" fill="none" stroke-width="1.4" stroke-linejoin="miter"/>
<path d="M2244.5 8.5H2238.5V24.2H2256V18M2247 8.5H2256V14.5M2255.5 9L2248 16.5M2238.5 18.5H2246.5V24.2" stroke="#666" fill="none" stroke-width="1.4" />
<circle cx="2276.3" cy="14.6" r="1.7" fill="#555"/>
<circle cx="2284.7" cy="14.6" r="1.7" fill="#555"/>
<circle cx="2292.9" cy="14.6" r="1.7" fill="#555"/>
<text transform="translate(1791 78.4) scale(1 1.15)" font-size="33.8" fill="#252423" font-weight="normal" text-anchor="start" font-family="Liberation Sans" >Display</text>
<circle cx="1923.7" cy="64.2" r="9.6" fill="none" stroke="#333" stroke-width="1.5"/>
<rect x="1922.7" y="62.5" width="2" height="7.5" fill="#333" stroke="none" stroke-width="1" />
<rect x="1922.7" y="58.2" width="2" height="2.2" fill="#333" stroke="none" stroke-width="1" />
<path d="M2255.5 62.5L2276 83M2276 62.5L2255.5 83" stroke="#252423" fill="none" stroke-width="2.2" />
<rect x="1790" y="109.5" width="474.5" height="48" fill="#fff" stroke="#dedede" stroke-width="1.3" />
<circle cx="1818.3" cy="131.4" r="6.4" fill="none" stroke="#8a8a8a" stroke-width="1.4"/>
<line x1="1804.3" y1="145.6" x2="1813.8" y2="136" stroke="#8a8a8a" stroke-width="1.6" />
<text transform="translate(1835 141.9) scale(1 1.1)" font-size="21.4" fill="#8f8f8f" font-weight="normal" text-anchor="start" font-family="Liberation Sans" >Search</text>
<text x="1781" y="195.7" font-size="22.3" fill="#555" font-weight="normal" text-anchor="start" font-family="Liberation Sans" stroke="#555" stroke-width="0.35">General</text>
<text x="1876.5" y="195.7" font-size="22.3" fill="#555" font-weight="normal" text-anchor="start" font-family="Liberation Sans" stroke="#555" stroke-width="0.35">Hierarchy</text>
<text x="1988.5" y="195.7" font-size="22.3" fill="#555" font-weight="normal" text-anchor="start" font-family="Liberation Sans" stroke="#555" stroke-width="0.35">Numbers</text>
<text x="2096.5" y="195.7" font-size="22.3" fill="#555" font-weight="normal" text-anchor="start" font-family="Liberation Sans" stroke="#555" stroke-width="0.35">Misc.</text>
<text x="2166.5" y="195.7" font-size="22.6" fill="#252423" font-weight="normal" text-anchor="start" font-family="Liberation Sans" stroke="#252423" stroke-width="0.35">Scripting</text>
<rect x="2166" y="205.5" width="92" height="3.4" fill="#0a72cc" stroke="none" stroke-width="1" />
<text x="1797" y="268.5" font-size="19.8" fill="#252423" font-weight="normal" text-anchor="start" font-family="Liberation Sans" >Note: Script will be executed every time when the</text>
<text x="1797" y="298.3" font-size="19.8" fill="#252423" font-weight="normal" text-anchor="start" font-family="Liberation Sans" >visual is loaded</text>
<text x="1797" y="331.2" font-size="19.3" fill="#252423" font-weight="bold" text-anchor="start" font-family="Liberation Sans" >On Load</text>
<path d="M2223 332L2242.5 312.5M2234 312.5H2242.5V321M2223 323.5V332H2231.5" stroke="#444" fill="none" stroke-width="1.5" />
<rect x="1798" y="354" width="459.5" height="221.5" fill="#fff" stroke="#e0e0e0" stroke-width="2.4" />
<text transform="translate(1807.5 388.1) scale(1 1.08)" font-size="19.9" fill="#2b6fc0" font-weight="normal" text-anchor="start" font-family="Liberation Sans" >LAYOUT.AUTOFIT</text>
<path d="M1803 596.5C1800 593.5 1798.8 590.5 1798.8 588 a7.4 7.4 0 0 1 14.8 0C1813.6 590.5 1812.4 593.5 1809.4 596.5V601H1803Z" stroke="#666" fill="none" stroke-width="1.3" />
<line x1="1803" y1="598.8" x2="1809.4" y2="598.8" stroke="#666" stroke-width="1.1" />
<text x="1825.5" y="597" font-size="18.3" fill="#555" font-weight="bold" text-anchor="start" font-family="Liberation Sans" >Example</text>
<text x="1903" y="597" font-size="18.8" fill="#555" font-weight="normal" text-anchor="start" font-family="Liberation Sans" >:</text>
<text x="1825.5" y="627.2" font-size="18.8" fill="#555" font-family="Liberation Sans">Use <tspan font-weight="bold" fill="#444">Ctrl + Space</tspan> to open</text>
<text x="1825.5" y="657.3" font-size="18.5" fill="#555" font-weight="normal" text-anchor="start" font-family="Liberation Sans" >suggestionSHOWBETWEENPERIOD(LASTNQTR(1))</text>
<rect x="2113" y="694.7" width="144.6" height="53.7" fill="#0078d4" stroke="none" stroke-width="1" />
<text transform="translate(2185.6 731) scale(1 1.15)" font-size="20.9" fill="#ffffff" font-weight="bold" text-anchor="middle" font-family="Liberation Sans" >Run now</text>
</svg>
</body></html>
